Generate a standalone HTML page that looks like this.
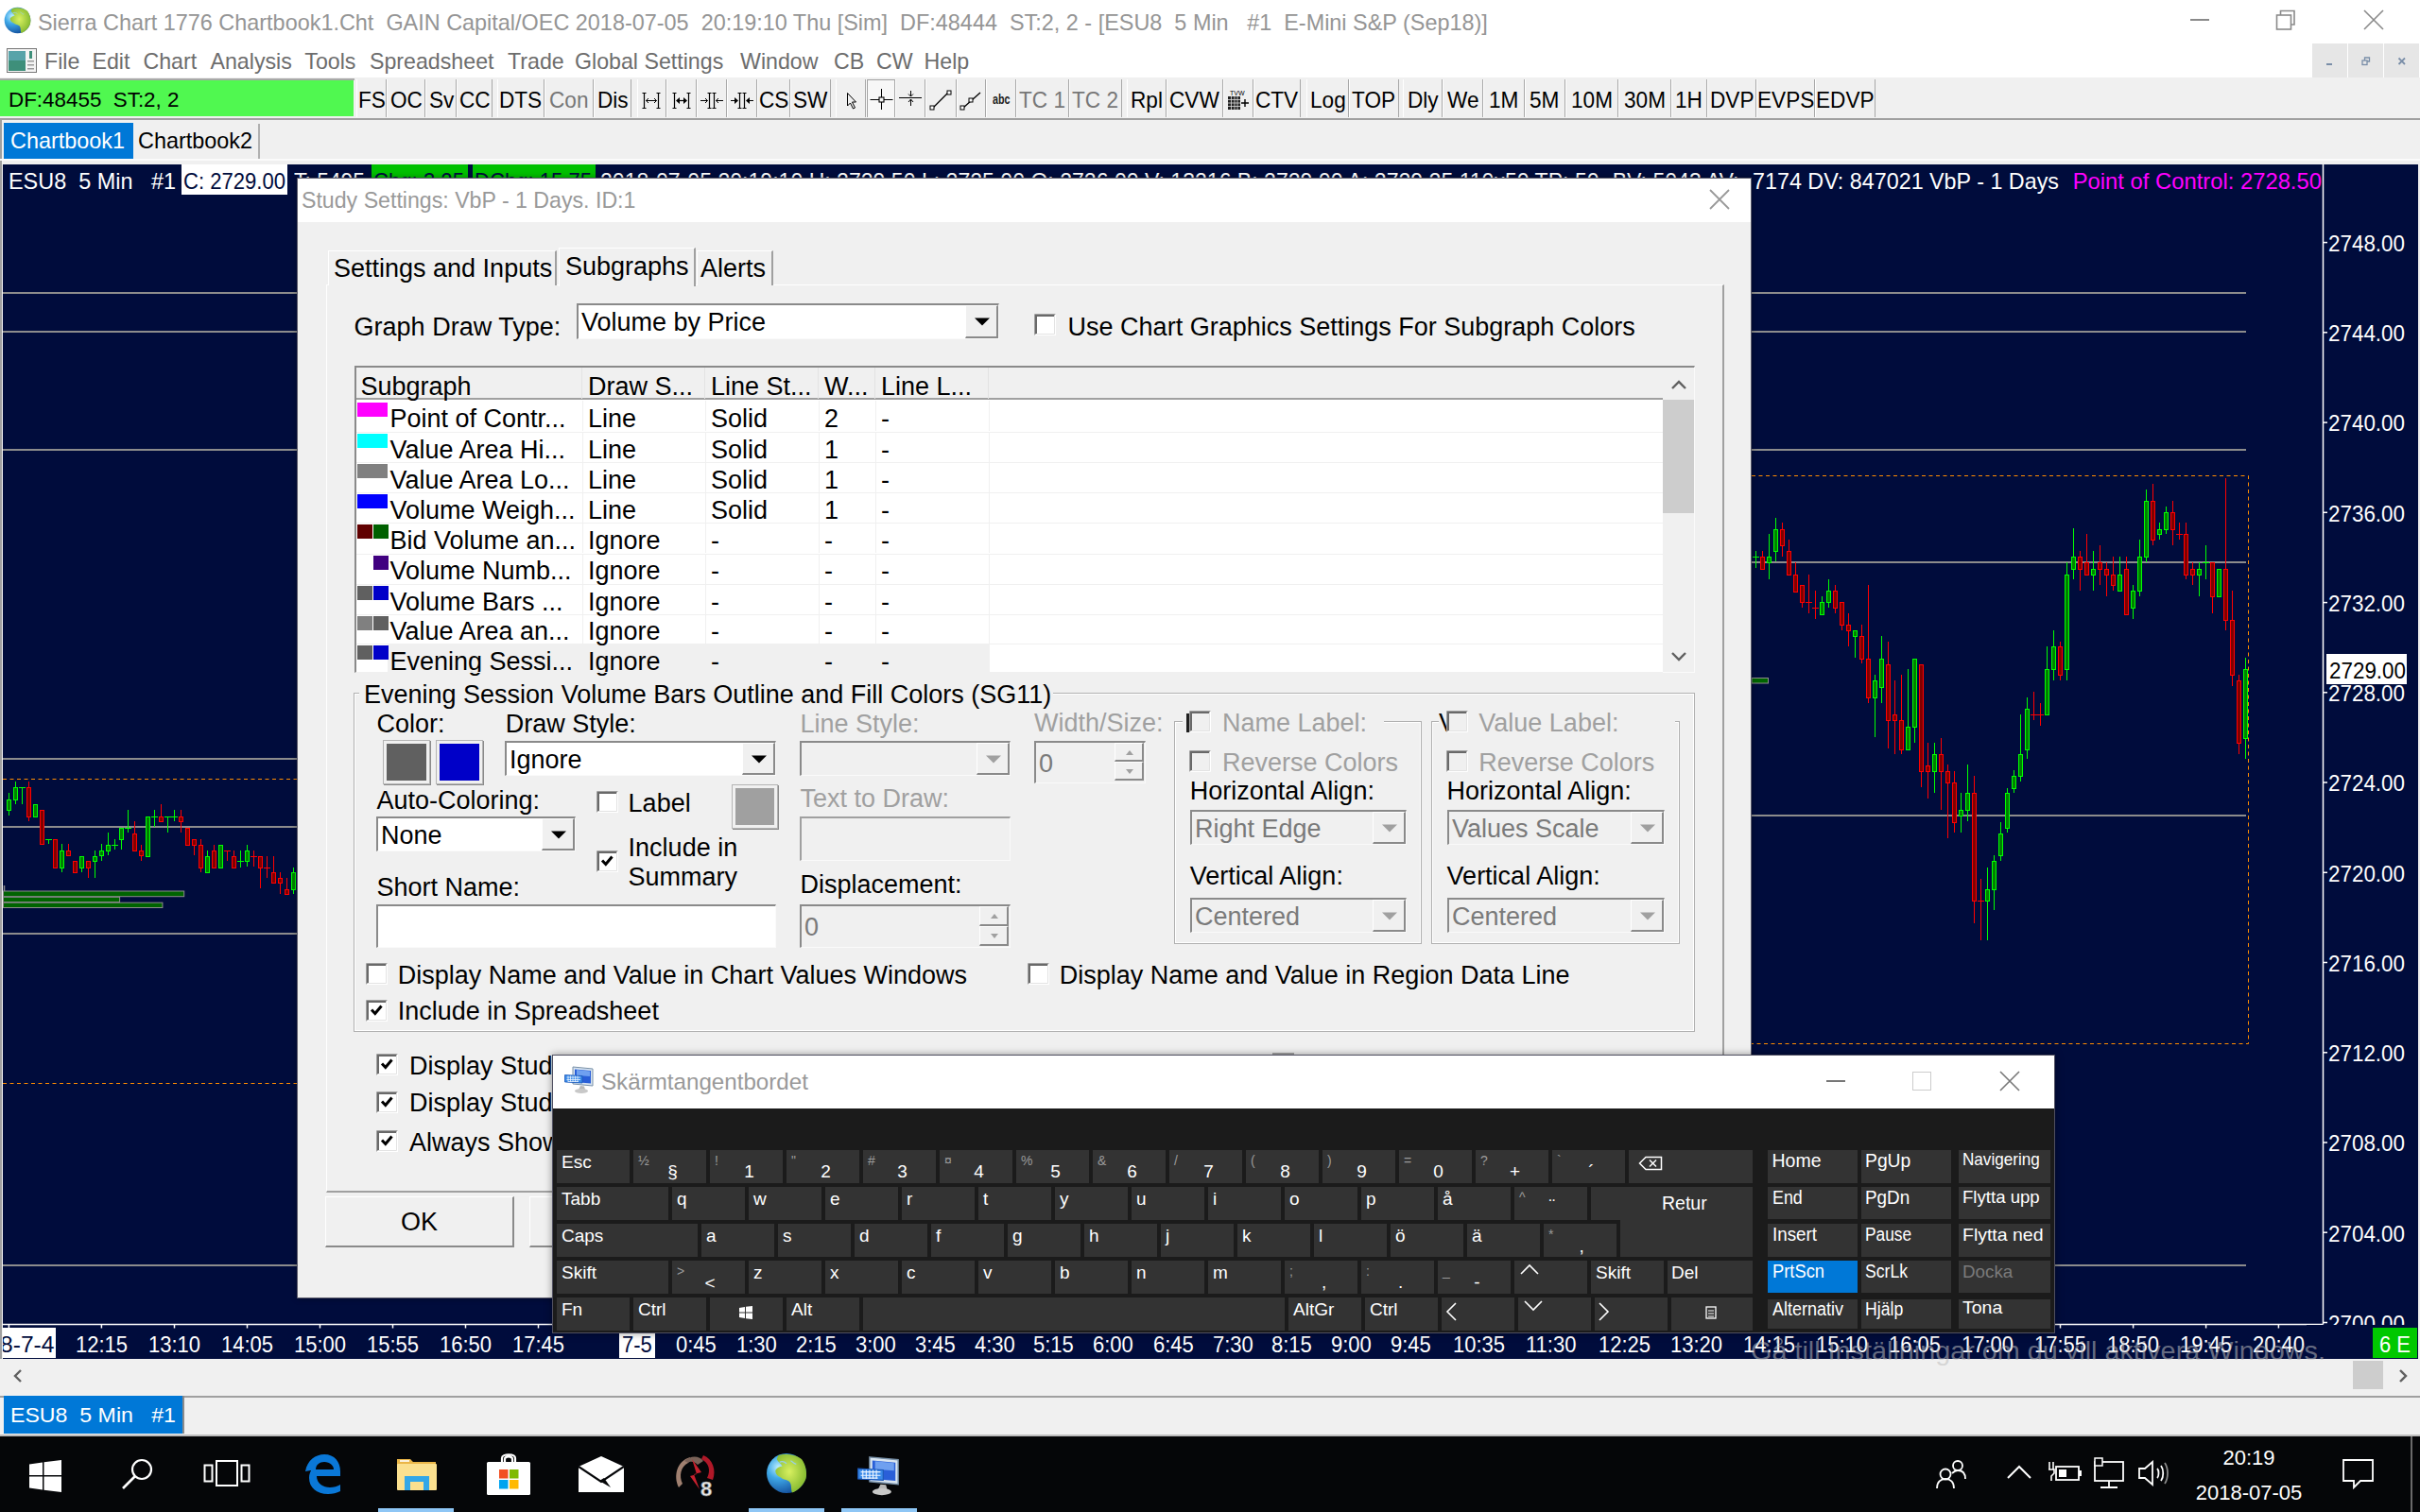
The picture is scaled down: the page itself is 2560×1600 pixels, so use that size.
<!DOCTYPE html><html><head><meta charset="utf-8"><style>
html,body{margin:0;padding:0;}
body{width:2560px;height:1600px;overflow:hidden;position:relative;background:#f0f0f0;font-family:"Liberation Sans",sans-serif;}
.a{position:absolute;}
.t{position:absolute;white-space:pre;font-family:"Liberation Sans",sans-serif;}
</style></head><body>

<div class="a" style="left:0px;top:0px;width:2560px;height:82px;background:#fff;"></div>
<svg class="a" style="left:4px;top:7px" width="29" height="29" viewBox="0 0 30 30">
<defs><radialGradient id="go" cx="0.3" cy="0.35" r="0.8"><stop offset="0" stop-color="#bff0ff"/><stop offset="0.35" stop-color="#3fa8e8"/><stop offset="1" stop-color="#0a3c8c"/></radialGradient>
<radialGradient id="gl" cx="0.45" cy="0.45" r="0.75"><stop offset="0" stop-color="#d8f060"/><stop offset="1" stop-color="#6aa820"/></radialGradient></defs>
<circle cx="15" cy="15" r="14.3" fill="url(#go)"/>
<path d="M9 2.2C14 0.5 22 1.5 26 5C29 9 30 15 29 19C27 24 23 28 19 29C18 26 19 23 17 21C15 19 13 20 11 18C8 17 7 15 7 13C8 11 10 10 12 10C11 8 9 7 8 5Z" fill="url(#gl)"/>
<path d="M10 7C12 6 14 7 15 8M18 6C20 7 21 9 22 8" stroke="#9ad0e8" stroke-width="0.8" fill="none"/>
</svg>
<div class="t" style="left:39.5px;top:12.5px;font-size:23.6px;line-height:23.6px;color:#959595;transform:scaleX(0.9926);transform-origin:0 0;">Sierra Chart 1776 Chartbook1.Cht  GAIN Capital/OEC 2018-07-05  20:19:10 Thu [Sim]  DF:48444  ST:2, 2 - [ESU8  5 Min   #1  E-Mini S&amp;P (Sep18)]</div>
<div class="a" style="left:2317px;top:20px;width:20px;height:2px;background:#8a8a8a;"></div>
<svg class="a" style="left:2404px;top:9px" width="26" height="26" viewBox="0 0 26 26"><rect x="4.5" y="7" width="15" height="15" fill="none" stroke="#8a8a8a" stroke-width="1.6"/><path d="M8.5 7 V2.5 H23 V17 H19.5" fill="none" stroke="#8a8a8a" stroke-width="1.6"/></svg>
<svg class="a" style="left:2498px;top:8px" width="26" height="26" viewBox="0 0 26 26"><path d="M3 3 L23 23 M23 3 L3 23" stroke="#8a8a8a" stroke-width="1.6"/></svg>
<svg class="a" style="left:7px;top:50px" width="32" height="27" viewBox="0 0 32 27"><rect x="0.5" y="1.5" width="31" height="25" fill="#f4f4f4" stroke="#777"/><rect x="2" y="4" width="18" height="21" fill="#3e8f7a"/><rect x="2" y="4" width="18" height="10" fill="#6ab0c8" opacity="0.6"/><rect x="24" y="4" width="3" height="8" fill="#3e8f7a"/><rect x="22" y="14" width="7" height="1.5" fill="#999"/><rect x="22" y="18" width="7" height="1.5" fill="#999"/><rect x="22" y="22" width="7" height="1.5" fill="#999"/></svg>
<div class="t" style="left:47.0px;top:54.4px;font-size:23.2px;line-height:23.2px;color:#6d6d6d;">File</div>
<div class="t" style="left:97.5px;top:54.4px;font-size:23.2px;line-height:23.2px;color:#6d6d6d;">Edit</div>
<div class="t" style="left:151.4px;top:54.4px;font-size:23.2px;line-height:23.2px;color:#6d6d6d;">Chart</div>
<div class="t" style="left:222.5px;top:54.4px;font-size:23.2px;line-height:23.2px;color:#6d6d6d;">Analysis</div>
<div class="t" style="left:322.3px;top:54.4px;font-size:23.2px;line-height:23.2px;color:#6d6d6d;">Tools</div>
<div class="t" style="left:391.0px;top:54.4px;font-size:23.2px;line-height:23.2px;color:#6d6d6d;">Spreadsheet</div>
<div class="t" style="left:537.0px;top:54.4px;font-size:23.2px;line-height:23.2px;color:#6d6d6d;">Trade</div>
<div class="t" style="left:608.0px;top:54.4px;font-size:23.2px;line-height:23.2px;color:#6d6d6d;">Global Settings</div>
<div class="t" style="left:783.0px;top:54.4px;font-size:23.2px;line-height:23.2px;color:#6d6d6d;">Window</div>
<div class="t" style="left:882.0px;top:54.4px;font-size:23.2px;line-height:23.2px;color:#6d6d6d;">CB</div>
<div class="t" style="left:927.0px;top:54.4px;font-size:23.2px;line-height:23.2px;color:#6d6d6d;">CW</div>
<div class="t" style="left:977.5px;top:54.4px;font-size:23.2px;line-height:23.2px;color:#6d6d6d;">Help</div>
<div class="a" style="left:2446px;top:46px;width:37px;height:37px;background:#e6e6e6;"></div>
<div class="a" style="left:2484px;top:46px;width:37px;height:37px;background:#e6e6e6;"></div>
<div class="a" style="left:2522px;top:46px;width:37px;height:37px;background:#e6e6e6;"></div>
<div class="a" style="left:2461px;top:67px;width:6px;height:2px;background:#7a8ea8;"></div>
<svg class="a" style="left:2498px;top:60px" width="10" height="10" viewBox="0 0 10 10"><rect x="1" y="4" width="5" height="4.5" fill="none" stroke="#7a8ea8" stroke-width="1.3"/><path d="M3.5 4V1H8.5V5H6" fill="none" stroke="#7a8ea8" stroke-width="1.3"/></svg>
<svg class="a" style="left:2536px;top:60px" width="10" height="10" viewBox="0 0 10 10"><path d="M1.5 1.5L8 8M8 1.5L1.5 8" stroke="#7a8ea8" stroke-width="1.8"/></svg>
<div class="a" style="left:0px;top:82px;width:2560px;height:46px;background:#f0f0f0;"></div>
<div class="a" style="left:0px;top:83px;width:375px;height:2px;background:#a8a8a8;"></div>
<div class="a" style="left:0px;top:125px;width:2560px;height:2px;background:#a0a0a0;"></div>
<div class="a" style="left:0px;top:85px;width:374px;height:38px;background:#50f850;"></div>
<div class="t" style="left:9.0px;top:95.0px;font-size:22.4px;line-height:22.4px;color:#000;">DF:48455  ST:2, 2</div>
<div class="a" style="left:377px;top:84px;width:32px;height:40px;border-left:1px solid #fff;border-right:1px solid #a8a8a8;box-sizing:border-box;"></div>
<div class="t" style="left:378.9px;top:94.3px;font-size:24.5px;line-height:24.5px;color:#000;transform:scaleX(0.9224);transform-origin:0 0;">FS</div>
<div class="a" style="left:409px;top:84px;width:41px;height:40px;border-left:1px solid #fff;border-right:1px solid #a8a8a8;box-sizing:border-box;"></div>
<div class="t" style="left:412.9px;top:94.3px;font-size:24.5px;line-height:24.5px;color:#000;transform:scaleX(0.9224);transform-origin:0 0;">OC</div>
<div class="a" style="left:450px;top:84px;width:33px;height:40px;border-left:1px solid #fff;border-right:1px solid #a8a8a8;box-sizing:border-box;"></div>
<div class="t" style="left:453.5px;top:94.3px;font-size:24.5px;line-height:24.5px;color:#000;transform:scaleX(0.9224);transform-origin:0 0;">Sv</div>
<div class="a" style="left:483px;top:84px;width:38px;height:40px;border-left:1px solid #fff;border-right:1px solid #a8a8a8;box-sizing:border-box;"></div>
<div class="t" style="left:485.7px;top:94.3px;font-size:24.5px;line-height:24.5px;color:#000;transform:scaleX(0.9224);transform-origin:0 0;">CC</div>
<div class="a" style="left:526px;top:84px;width:50px;height:40px;border-left:1px solid #fff;border-right:1px solid #a8a8a8;box-sizing:border-box;"></div>
<div class="t" style="left:528.4px;top:94.3px;font-size:24.5px;line-height:24.5px;color:#000;transform:scaleX(0.9224);transform-origin:0 0;">DTS</div>
<div class="a" style="left:576px;top:84px;width:52px;height:40px;border-left:1px solid #fff;border-right:1px solid #a8a8a8;box-sizing:border-box;"></div>
<div class="t" style="left:581.1px;top:94.3px;font-size:24.5px;line-height:24.5px;color:#777;transform:scaleX(0.9224);transform-origin:0 0;">Con</div>
<div class="a" style="left:628px;top:84px;width:40px;height:40px;border-left:1px solid #fff;border-right:1px solid #a8a8a8;box-sizing:border-box;"></div>
<div class="t" style="left:631.7px;top:94.3px;font-size:24.5px;line-height:24.5px;color:#000;transform:scaleX(0.9224);transform-origin:0 0;">Dis</div>
<div class="a" style="left:674px;top:84px;width:31px;height:40px;border-left:1px solid #fff;border-right:1px solid #a8a8a8;box-sizing:border-box;"></div>
<svg class="a" style="left:675.1px;top:92px" width="28" height="28" viewBox="0 0 28 28"><path d="M6.5 6V23M21.5 6V23M4.5 6.5H8.5M19.5 22.5H23.5M4.5 22.5H8.5M19.5 6.5H23.5" stroke="#000" stroke-width="1.2" fill="none"/><path d="M8.5 14.5H19.5M8.5 14.5L11 12M8.5 14.5L11 17M19.5 14.5L17 12M19.5 14.5L17 17" stroke="#000" stroke-width="1" fill="none"/></svg>
<div class="a" style="left:705px;top:84px;width:32px;height:40px;border-left:1px solid #fff;border-right:1px solid #a8a8a8;box-sizing:border-box;"></div>
<svg class="a" style="left:706.8px;top:92px" width="28" height="28" viewBox="0 0 28 28"><path d="M6.5 6V23M21.5 6V23M4.5 6.5H8.5M19.5 22.5H23.5M4.5 22.5H8.5M19.5 6.5H23.5" stroke="#000" stroke-width="1.2" fill="none"/><path d="M9 14.5H19" stroke="#000" stroke-width="1.2"/><path d="M8 14.5L12 11V18Z M20 14.5L16 11V18Z" fill="#000"/></svg>
<div class="a" style="left:737px;top:84px;width:32px;height:40px;border-left:1px solid #fff;border-right:1px solid #a8a8a8;box-sizing:border-box;"></div>
<svg class="a" style="left:738.8px;top:92px" width="28" height="28" viewBox="0 0 28 28"><path d="M11.5 6V23M16.5 6V23M9.5 22.5H13.5M14.5 6.5H18.5M9.5 6.5H13.5M14.5 22.5H18.5" stroke="#000" stroke-width="1.2" fill="none"/><path d="M2 14.5H9.5M9.5 14.5L7 12M9.5 14.5L7 17M26 14.5H18.5M18.5 14.5L21 12M18.5 14.5L21 17" stroke="#000" stroke-width="1" fill="none"/></svg>
<div class="a" style="left:769px;top:84px;width:32px;height:40px;border-left:1px solid #fff;border-right:1px solid #a8a8a8;box-sizing:border-box;"></div>
<svg class="a" style="left:770.8px;top:92px" width="28" height="28" viewBox="0 0 28 28"><path d="M11.5 6V23M16.5 6V23M9.5 22.5H13.5M14.5 6.5H18.5M9.5 6.5H13.5M14.5 22.5H18.5" stroke="#000" stroke-width="1.2" fill="none"/><path d="M2 14.5H8M26 14.5H20" stroke="#000" stroke-width="1.2"/><path d="M10 14.5L6 11V18Z M18 14.5L22 11V18Z" fill="#000"/></svg>
<div class="a" style="left:801px;top:84px;width:35px;height:40px;border-left:1px solid #fff;border-right:1px solid #a8a8a8;box-sizing:border-box;"></div>
<div class="t" style="left:803.0px;top:94.3px;font-size:24.5px;line-height:24.5px;color:#000;transform:scaleX(0.9224);transform-origin:0 0;">CS</div>
<div class="a" style="left:836px;top:84px;width:43px;height:40px;border-left:1px solid #fff;border-right:1px solid #a8a8a8;box-sizing:border-box;"></div>
<div class="t" style="left:839.4px;top:94.3px;font-size:24.5px;line-height:24.5px;color:#000;transform:scaleX(0.9224);transform-origin:0 0;">SW</div>
<div class="a" style="left:884px;top:84px;width:32px;height:40px;border-left:1px solid #fff;border-right:1px solid #a8a8a8;box-sizing:border-box;"></div>
<svg class="a" style="left:886.0px;top:92px" width="28" height="28" viewBox="0 0 28 28"><path d="M10.5 6.5L10.5 20L13.5 17L16.5 23L18.5 22L15.5 16L19.5 16Z" fill="#f0f0f0" stroke="#000" stroke-width="1"/></svg>
<div class="a" style="left:916px;top:84px;width:31px;height:40px;border-left:1px solid #fff;border-right:1px solid #a8a8a8;box-sizing:border-box;"></div>
<svg class="a" style="left:917.6px;top:92px" width="28" height="28" viewBox="0 0 28 28"><path d="M14.5 2V24M2.5 13.5H26.5" stroke="#000" stroke-width="1"/><rect x="12" y="11" width="5" height="5" fill="#f7f7f7" stroke="#000" stroke-width="1.1"/></svg>
<div class="a" style="left:947px;top:84px;width:32px;height:40px;border-left:1px solid #fff;border-right:1px solid #a8a8a8;box-sizing:border-box;"></div>
<svg class="a" style="left:949.2px;top:92px" width="28" height="28" viewBox="0 0 28 28"><path d="M2 11.5H26M14.5 4V10M14.5 13V20M12 7.5L14.5 10L17 7.5M12 16L14.5 13L17 16" stroke="#000" stroke-width="1" fill="none"/></svg>
<div class="a" style="left:979px;top:84px;width:33px;height:40px;border-left:1px solid #fff;border-right:1px solid #a8a8a8;box-sizing:border-box;"></div>
<svg class="a" style="left:981.4px;top:92px" width="28" height="28" viewBox="0 0 28 28"><path d="M6 22L22 6" stroke="#000" stroke-width="1.3"/><rect x="3" y="20" width="4" height="4" fill="#fff" stroke="#000"/><rect x="21" y="4" width="4" height="4" fill="#fff" stroke="#000"/></svg>
<div class="a" style="left:1012px;top:84px;width:31px;height:40px;border-left:1px solid #fff;border-right:1px solid #a8a8a8;box-sizing:border-box;"></div>
<svg class="a" style="left:1013.2px;top:92px" width="28" height="28" viewBox="0 0 28 28"><path d="M6 22L24 6" stroke="#000" stroke-width="1.3"/><rect x="3" y="20" width="4" height="4" fill="#fff" stroke="#000"/><rect x="12" y="12" width="4" height="4" fill="#fff" stroke="#000"/></svg>
<div class="a" style="left:1043px;top:84px;width:32px;height:40px;border-left:1px solid #fff;border-right:1px solid #a8a8a8;box-sizing:border-box;"></div>
<div class="t" style="left:1049.8px;top:98.1px;font-size:14px;line-height:14px;color:#222;transform:scaleX(0.7669);transform-origin:0 0;font-weight:bold;">abc</div>
<div class="a" style="left:1075px;top:84px;width:56px;height:40px;border-left:1px solid #fff;border-right:1px solid #a8a8a8;box-sizing:border-box;"></div>
<div class="t" style="left:1078.4px;top:94.3px;font-size:24.5px;line-height:24.5px;color:#777;transform:scaleX(0.9224);transform-origin:0 0;">TC 1</div>
<div class="a" style="left:1131px;top:84px;width:56px;height:40px;border-left:1px solid #fff;border-right:1px solid #a8a8a8;box-sizing:border-box;"></div>
<div class="t" style="left:1134.4px;top:94.3px;font-size:24.5px;line-height:24.5px;color:#777;transform:scaleX(0.9224);transform-origin:0 0;">TC 2</div>
<div class="a" style="left:1192px;top:84px;width:42px;height:40px;border-left:1px solid #fff;border-right:1px solid #a8a8a8;box-sizing:border-box;"></div>
<div class="t" style="left:1196.0px;top:94.3px;font-size:24.5px;line-height:24.5px;color:#000;transform:scaleX(0.9224);transform-origin:0 0;">Rpl</div>
<div class="a" style="left:1234px;top:84px;width:60px;height:40px;border-left:1px solid #fff;border-right:1px solid #a8a8a8;box-sizing:border-box;"></div>
<div class="t" style="left:1237.2px;top:94.3px;font-size:24.5px;line-height:24.5px;color:#000;transform:scaleX(0.9224);transform-origin:0 0;">CVW</div>
<div class="a" style="left:1294px;top:84px;width:32px;height:40px;border-left:1px solid #fff;border-right:1px solid #a8a8a8;box-sizing:border-box;"></div>
<svg class="a" style="left:1295.5px;top:92px" width="28" height="28" viewBox="0 0 28 28"><text x="5" y="9" font-size="7" font-family="Liberation Sans">TVW</text><rect x="3" y="10" width="13" height="14" fill="#222"/><path d="M3 13.5H16M3 17H16M3 20.5H16M6.5 10V24M10 10V24M13 10V24" stroke="#ddd" stroke-width="0.8"/><path d="M17 17H25M21 13V21" stroke="#000" stroke-width="1.4"/></svg>
<div class="a" style="left:1326px;top:84px;width:50px;height:40px;border-left:1px solid #fff;border-right:1px solid #a8a8a8;box-sizing:border-box;"></div>
<div class="t" style="left:1328.2px;top:94.3px;font-size:24.5px;line-height:24.5px;color:#000;transform:scaleX(0.9224);transform-origin:0 0;">CTV</div>
<div class="a" style="left:1382px;top:84px;width:45px;height:40px;border-left:1px solid #fff;border-right:1px solid #a8a8a8;box-sizing:border-box;"></div>
<div class="t" style="left:1385.7px;top:94.3px;font-size:24.5px;line-height:24.5px;color:#000;transform:scaleX(0.9224);transform-origin:0 0;">Log</div>
<div class="a" style="left:1427px;top:84px;width:53px;height:40px;border-left:1px solid #fff;border-right:1px solid #a8a8a8;box-sizing:border-box;"></div>
<div class="t" style="left:1430.4px;top:94.3px;font-size:24.5px;line-height:24.5px;color:#000;transform:scaleX(0.9224);transform-origin:0 0;">TOP</div>
<div class="a" style="left:1484px;top:84px;width:42px;height:40px;border-left:1px solid #fff;border-right:1px solid #a8a8a8;box-sizing:border-box;"></div>
<div class="t" style="left:1489.0px;top:94.3px;font-size:24.5px;line-height:24.5px;color:#000;transform:scaleX(0.9224);transform-origin:0 0;">Dly</div>
<div class="a" style="left:1526px;top:84px;width:43px;height:40px;border-left:1px solid #fff;border-right:1px solid #a8a8a8;box-sizing:border-box;"></div>
<div class="t" style="left:1531.0px;top:94.3px;font-size:24.5px;line-height:24.5px;color:#000;transform:scaleX(0.9224);transform-origin:0 0;">We</div>
<div class="a" style="left:1569px;top:84px;width:44px;height:40px;border-left:1px solid #fff;border-right:1px solid #a8a8a8;box-sizing:border-box;"></div>
<div class="t" style="left:1575.2px;top:94.3px;font-size:24.5px;line-height:24.5px;color:#000;transform:scaleX(0.9224);transform-origin:0 0;">1M</div>
<div class="a" style="left:1613px;top:84px;width:43px;height:40px;border-left:1px solid #fff;border-right:1px solid #a8a8a8;box-sizing:border-box;"></div>
<div class="t" style="left:1618.4px;top:94.3px;font-size:24.5px;line-height:24.5px;color:#000;transform:scaleX(0.9224);transform-origin:0 0;">5M</div>
<div class="a" style="left:1656px;top:84px;width:56px;height:40px;border-left:1px solid #fff;border-right:1px solid #a8a8a8;box-sizing:border-box;"></div>
<div class="t" style="left:1661.7px;top:94.3px;font-size:24.5px;line-height:24.5px;color:#000;transform:scaleX(0.9224);transform-origin:0 0;">10M</div>
<div class="a" style="left:1712px;top:84px;width:56px;height:40px;border-left:1px solid #fff;border-right:1px solid #a8a8a8;box-sizing:border-box;"></div>
<div class="t" style="left:1717.8px;top:94.3px;font-size:24.5px;line-height:24.5px;color:#000;transform:scaleX(0.9224);transform-origin:0 0;">30M</div>
<div class="a" style="left:1768px;top:84px;width:38px;height:40px;border-left:1px solid #fff;border-right:1px solid #a8a8a8;box-sizing:border-box;"></div>
<div class="t" style="left:1772.3px;top:94.3px;font-size:24.5px;line-height:24.5px;color:#000;transform:scaleX(0.9224);transform-origin:0 0;">1H</div>
<div class="a" style="left:1806px;top:84px;width:52px;height:40px;border-left:1px solid #fff;border-right:1px solid #a8a8a8;box-sizing:border-box;"></div>
<div class="t" style="left:1808.7px;top:94.3px;font-size:24.5px;line-height:24.5px;color:#000;transform:scaleX(0.9224);transform-origin:0 0;">DVP</div>
<div class="a" style="left:1858px;top:84px;width:62px;height:40px;border-left:1px solid #fff;border-right:1px solid #a8a8a8;box-sizing:border-box;"></div>
<div class="t" style="left:1858.9px;top:94.3px;font-size:24.5px;line-height:24.5px;color:#000;transform:scaleX(0.9224);transform-origin:0 0;">EVPS</div>
<div class="a" style="left:1920px;top:84px;width:64px;height:40px;border-left:1px solid #fff;border-right:1px solid #a8a8a8;box-sizing:border-box;"></div>
<div class="t" style="left:1921.3px;top:94.3px;font-size:24.5px;line-height:24.5px;color:#000;transform:scaleX(0.9224);transform-origin:0 0;">EDVP</div>
<div class="a" style="left:917px;top:84px;width:30px;height:40px;background:#f7f7f7;border-left:1px solid #a0a0a0;border-top:1px solid #a0a0a0;border-right:1px solid #a8a8a8;box-sizing:border-box;"></div>
<svg class="a" style="left:918.0px;top:92px" width="28" height="28" viewBox="0 0 28 28"><path d="M14.5 2V24M2.5 13.5H26.5" stroke="#000" stroke-width="1"/><rect x="12" y="11" width="5" height="5" fill="#f7f7f7" stroke="#000" stroke-width="1.1"/></svg>
<div class="a" style="left:0px;top:127px;width:2560px;height:47px;background:#f0f0f0;"></div>
<div class="a" style="left:0px;top:126px;width:2px;height:50px;background:#a0a0a0;"></div>
<div class="a" style="left:4px;top:130px;width:137px;height:38px;background:#0078d7;"></div>
<div class="t" style="left:10.5px;top:137.5px;font-size:23.6px;line-height:23.6px;color:#fff;transform:scaleX(0.9918);transform-origin:0 0;">Chartbook1</div>
<div class="a" style="left:142px;top:131px;width:133px;height:37px;border-right:2px solid #b0b0b0;box-sizing:border-box;"></div>
<div class="t" style="left:146.3px;top:137.5px;font-size:23.6px;line-height:23.6px;color:#000;transform:scaleX(0.9918);transform-origin:0 0;">Chartbook2</div>
<div class="a" style="left:0px;top:168px;width:2560px;height:2px;background:#fbfbfb;"></div>
<div class="a" style="left:0px;top:170px;width:2px;height:1270px;background:#a0a0a0;"></div>
<div class="a" style="left:2px;top:170px;width:1px;height:1270px;background:#f4f4f4;"></div>
<div class="a" style="left:3px;top:174px;width:2555px;height:1264px;background:#000c3c;"></div>
<svg class="a" style="left:0;top:0" width="2560" height="1600" viewBox="0 0 2560 1600"><rect x="3" y="309" width="2373" height="2" fill="#8c8c8c"/><rect x="3" y="350" width="2373" height="2" fill="#8c8c8c"/><rect x="3" y="475" width="2373" height="2" fill="#8c8c8c"/><rect x="3" y="802" width="313" height="2" fill="#8c8c8c"/><rect x="3" y="874" width="313" height="2" fill="#8c8c8c"/><rect x="3" y="987" width="313" height="2" fill="#8c8c8c"/><rect x="3" y="1338" width="313" height="2" fill="#8c8c8c"/><rect x="1853" y="594" width="523" height="2" fill="#8c8c8c"/><rect x="1853" y="862" width="523" height="2" fill="#8c8c8c"/><rect x="1853" y="1338" width="523" height="2" fill="#8c8c8c"/><path d="M3 824.5H316" stroke="#ff8c00" stroke-width="1" stroke-dasharray="4 3.5"/><path d="M3 1146.5H316" stroke="#ff8c00" stroke-width="1" stroke-dasharray="4 3.5"/><path d="M1853 503.5H2378.5V1104.5H1853" fill="none" stroke="#ff8c00" stroke-width="1" stroke-dasharray="4 3.5"/><path d="M4.5 937V943" stroke="#8c8c8c" stroke-width="1.5"/><rect x="3.5" y="943" width="191.2" height="5.7000000000000455" fill="#006400" stroke="#8c8c8c" stroke-width="1"/><rect x="3.5" y="949.3" width="123.1" height="5.300000000000068" fill="#006400" stroke="#8c8c8c" stroke-width="1"/><rect x="3.5" y="955.2" width="168.4" height="5.2999999999999545" fill="#006400" stroke="#8c8c8c" stroke-width="1"/><rect x="1853" y="717.5" width="17.5" height="5.5" fill="#006400" stroke="#8c8c8c" stroke-width="1"/><rect x="1857" y="583" width="1" height="18" fill="#00ff00"/><rect x="1854" y="589" width="7" height="1" fill="#00ff00"/><rect x="1864" y="583" width="1" height="19" fill="#ff0000"/><rect x="1862" y="589" width="5" height="14" fill="#ff0000"/><rect x="1863" y="590" width="3" height="12" fill="#800000"/><rect x="1871" y="565" width="1" height="48" fill="#00ff00"/><rect x="1869" y="589" width="5" height="7" fill="#00ff00"/><rect x="1870" y="590" width="3" height="5" fill="#008000"/><rect x="1878" y="548" width="1" height="46" fill="#00ff00"/><rect x="1876" y="560" width="5" height="24" fill="#00ff00"/><rect x="1877" y="561" width="3" height="22" fill="#008000"/><rect x="1885" y="553" width="1" height="36" fill="#ff0000"/><rect x="1883" y="560" width="5" height="18" fill="#ff0000"/><rect x="1884" y="561" width="3" height="16" fill="#800000"/><rect x="1892" y="571" width="1" height="37" fill="#ff0000"/><rect x="1890" y="583" width="5" height="26" fill="#ff0000"/><rect x="1891" y="584" width="3" height="24" fill="#800000"/><rect x="1899" y="595" width="1" height="31" fill="#ff0000"/><rect x="1897" y="608" width="5" height="19" fill="#ff0000"/><rect x="1898" y="609" width="3" height="17" fill="#800000"/><rect x="1906" y="619" width="1" height="24" fill="#ff0000"/><rect x="1904" y="619" width="5" height="19" fill="#ff0000"/><rect x="1905" y="620" width="3" height="17" fill="#800000"/><rect x="1913" y="608" width="1" height="41" fill="#ff0000"/><rect x="1910" y="637" width="7" height="1" fill="#ff0000"/><rect x="1920" y="625" width="1" height="30" fill="#ff0000"/><rect x="1917" y="643" width="7" height="1" fill="#ff0000"/><rect x="1927" y="631" width="1" height="19" fill="#00ff00"/><rect x="1925" y="637" width="5" height="14" fill="#00ff00"/><rect x="1926" y="638" width="3" height="12" fill="#008000"/><rect x="1934" y="613" width="1" height="30" fill="#00ff00"/><rect x="1932" y="625" width="5" height="13" fill="#00ff00"/><rect x="1933" y="626" width="3" height="11" fill="#008000"/><rect x="1941" y="619" width="1" height="30" fill="#ff0000"/><rect x="1939" y="625" width="5" height="19" fill="#ff0000"/><rect x="1940" y="626" width="3" height="17" fill="#800000"/><rect x="1948" y="637" width="1" height="30" fill="#ff0000"/><rect x="1946" y="637" width="5" height="25" fill="#ff0000"/><rect x="1947" y="638" width="3" height="23" fill="#800000"/><rect x="1955" y="649" width="1" height="35" fill="#ff0000"/><rect x="1953" y="661" width="5" height="7" fill="#ff0000"/><rect x="1954" y="662" width="3" height="5" fill="#800000"/><rect x="1962" y="667" width="1" height="29" fill="#00ff00"/><rect x="1960" y="667" width="5" height="7" fill="#00ff00"/><rect x="1961" y="668" width="3" height="5" fill="#008000"/><rect x="1969" y="661" width="1" height="41" fill="#ff0000"/><rect x="1967" y="673" width="5" height="25" fill="#ff0000"/><rect x="1968" y="674" width="3" height="23" fill="#800000"/><rect x="1976" y="619" width="1" height="125" fill="#ff0000"/><rect x="1974" y="697" width="5" height="42" fill="#ff0000"/><rect x="1975" y="698" width="3" height="40" fill="#800000"/><rect x="1983" y="714" width="1" height="66" fill="#00ff00"/><rect x="1981" y="720" width="5" height="19" fill="#00ff00"/><rect x="1982" y="721" width="3" height="17" fill="#008000"/><rect x="1990" y="673" width="1" height="71" fill="#00ff00"/><rect x="1988" y="697" width="5" height="31" fill="#00ff00"/><rect x="1989" y="698" width="3" height="29" fill="#008000"/><rect x="1997" y="679" width="1" height="113" fill="#ff0000"/><rect x="1995" y="703" width="5" height="60" fill="#ff0000"/><rect x="1996" y="704" width="3" height="58" fill="#800000"/><rect x="2004" y="720" width="1" height="78" fill="#ff0000"/><rect x="2002" y="756" width="5" height="7" fill="#ff0000"/><rect x="2003" y="757" width="3" height="5" fill="#800000"/><rect x="2011" y="714" width="1" height="84" fill="#ff0000"/><rect x="2009" y="762" width="5" height="32" fill="#ff0000"/><rect x="2010" y="763" width="3" height="30" fill="#800000"/><rect x="2018" y="708" width="1" height="85" fill="#00ff00"/><rect x="2016" y="769" width="5" height="25" fill="#00ff00"/><rect x="2017" y="770" width="3" height="23" fill="#008000"/><rect x="2025" y="697" width="1" height="89" fill="#00ff00"/><rect x="2023" y="697" width="5" height="73" fill="#00ff00"/><rect x="2024" y="698" width="3" height="71" fill="#008000"/><rect x="2032" y="703" width="1" height="130" fill="#ff0000"/><rect x="2030" y="703" width="5" height="114" fill="#ff0000"/><rect x="2031" y="704" width="3" height="112" fill="#800000"/><rect x="2039" y="786" width="1" height="59" fill="#ff0000"/><rect x="2037" y="810" width="5" height="7" fill="#ff0000"/><rect x="2038" y="811" width="3" height="5" fill="#800000"/><rect x="2046" y="786" width="1" height="53" fill="#00ff00"/><rect x="2044" y="798" width="5" height="19" fill="#00ff00"/><rect x="2045" y="799" width="3" height="17" fill="#008000"/><rect x="2053" y="781" width="1" height="76" fill="#ff0000"/><rect x="2051" y="798" width="5" height="19" fill="#ff0000"/><rect x="2052" y="799" width="3" height="17" fill="#800000"/><rect x="2060" y="809" width="1" height="78" fill="#ff0000"/><rect x="2058" y="816" width="5" height="13" fill="#ff0000"/><rect x="2059" y="817" width="3" height="11" fill="#800000"/><rect x="2067" y="816" width="1" height="65" fill="#ff0000"/><rect x="2065" y="828" width="5" height="43" fill="#ff0000"/><rect x="2066" y="829" width="3" height="41" fill="#800000"/><rect x="2074" y="839" width="1" height="42" fill="#00ff00"/><rect x="2072" y="857" width="5" height="7" fill="#00ff00"/><rect x="2073" y="858" width="3" height="5" fill="#008000"/><rect x="2081" y="809" width="1" height="60" fill="#00ff00"/><rect x="2079" y="839" width="5" height="19" fill="#00ff00"/><rect x="2080" y="840" width="3" height="17" fill="#008000"/><rect x="2088" y="821" width="1" height="156" fill="#ff0000"/><rect x="2086" y="839" width="5" height="115" fill="#ff0000"/><rect x="2087" y="840" width="3" height="113" fill="#800000"/><rect x="2095" y="930" width="1" height="65" fill="#ff0000"/><rect x="2092" y="953" width="7" height="1" fill="#ff0000"/><rect x="2102" y="918" width="1" height="77" fill="#00ff00"/><rect x="2100" y="941" width="5" height="13" fill="#00ff00"/><rect x="2101" y="942" width="3" height="11" fill="#008000"/><rect x="2109" y="905" width="1" height="58" fill="#00ff00"/><rect x="2107" y="911" width="5" height="31" fill="#00ff00"/><rect x="2108" y="912" width="3" height="29" fill="#008000"/><rect x="2116" y="870" width="1" height="41" fill="#00ff00"/><rect x="2114" y="882" width="5" height="24" fill="#00ff00"/><rect x="2115" y="883" width="3" height="22" fill="#008000"/><rect x="2123" y="834" width="1" height="47" fill="#00ff00"/><rect x="2121" y="839" width="5" height="38" fill="#00ff00"/><rect x="2122" y="840" width="3" height="36" fill="#008000"/><rect x="2130" y="815" width="1" height="24" fill="#00ff00"/><rect x="2128" y="821" width="5" height="14" fill="#00ff00"/><rect x="2129" y="822" width="3" height="12" fill="#008000"/><rect x="2137" y="756" width="1" height="71" fill="#00ff00"/><rect x="2135" y="798" width="5" height="24" fill="#00ff00"/><rect x="2136" y="799" width="3" height="22" fill="#008000"/><rect x="2144" y="738" width="1" height="65" fill="#00ff00"/><rect x="2142" y="750" width="5" height="44" fill="#00ff00"/><rect x="2143" y="751" width="3" height="42" fill="#008000"/><rect x="2151" y="732" width="1" height="30" fill="#ff0000"/><rect x="2148" y="756" width="7" height="1" fill="#ff0000"/><rect x="2158" y="744" width="1" height="24" fill="#ff0000"/><rect x="2155" y="756" width="7" height="1" fill="#ff0000"/><rect x="2165" y="684" width="1" height="72" fill="#00ff00"/><rect x="2163" y="708" width="5" height="49" fill="#00ff00"/><rect x="2164" y="709" width="3" height="47" fill="#008000"/><rect x="2172" y="667" width="1" height="53" fill="#00ff00"/><rect x="2170" y="684" width="5" height="25" fill="#00ff00"/><rect x="2171" y="685" width="3" height="23" fill="#008000"/><rect x="2179" y="679" width="1" height="41" fill="#ff0000"/><rect x="2177" y="684" width="5" height="31" fill="#ff0000"/><rect x="2178" y="685" width="3" height="29" fill="#800000"/><rect x="2186" y="595" width="1" height="125" fill="#00ff00"/><rect x="2184" y="608" width="5" height="101" fill="#00ff00"/><rect x="2185" y="609" width="3" height="99" fill="#008000"/><rect x="2193" y="559" width="1" height="54" fill="#00ff00"/><rect x="2191" y="589" width="5" height="14" fill="#00ff00"/><rect x="2192" y="590" width="3" height="12" fill="#008000"/><rect x="2200" y="583" width="1" height="42" fill="#ff0000"/><rect x="2198" y="589" width="5" height="14" fill="#ff0000"/><rect x="2199" y="590" width="3" height="12" fill="#800000"/><rect x="2207" y="565" width="1" height="43" fill="#ff0000"/><rect x="2205" y="595" width="5" height="14" fill="#ff0000"/><rect x="2206" y="596" width="3" height="12" fill="#800000"/><rect x="2214" y="583" width="1" height="42" fill="#00ff00"/><rect x="2212" y="602" width="5" height="7" fill="#00ff00"/><rect x="2213" y="603" width="3" height="5" fill="#008000"/><rect x="2221" y="577" width="1" height="42" fill="#ff0000"/><rect x="2219" y="595" width="5" height="8" fill="#ff0000"/><rect x="2220" y="596" width="3" height="6" fill="#800000"/><rect x="2228" y="595" width="1" height="36" fill="#ff0000"/><rect x="2226" y="602" width="5" height="7" fill="#ff0000"/><rect x="2227" y="603" width="3" height="5" fill="#800000"/><rect x="2235" y="589" width="1" height="36" fill="#ff0000"/><rect x="2233" y="608" width="5" height="12" fill="#ff0000"/><rect x="2234" y="609" width="3" height="10" fill="#800000"/><rect x="2242" y="589" width="1" height="36" fill="#00ff00"/><rect x="2240" y="608" width="5" height="18" fill="#00ff00"/><rect x="2241" y="609" width="3" height="16" fill="#008000"/><rect x="2249" y="589" width="1" height="61" fill="#ff0000"/><rect x="2247" y="602" width="5" height="49" fill="#ff0000"/><rect x="2248" y="603" width="3" height="47" fill="#800000"/><rect x="2256" y="619" width="1" height="36" fill="#00ff00"/><rect x="2254" y="625" width="5" height="19" fill="#00ff00"/><rect x="2255" y="626" width="3" height="17" fill="#008000"/><rect x="2263" y="571" width="1" height="60" fill="#00ff00"/><rect x="2261" y="589" width="5" height="37" fill="#00ff00"/><rect x="2262" y="590" width="3" height="35" fill="#008000"/><rect x="2270" y="518" width="1" height="77" fill="#00ff00"/><rect x="2268" y="530" width="5" height="60" fill="#00ff00"/><rect x="2269" y="531" width="3" height="58" fill="#008000"/><rect x="2277" y="512" width="1" height="65" fill="#ff0000"/><rect x="2275" y="530" width="5" height="42" fill="#ff0000"/><rect x="2276" y="531" width="3" height="40" fill="#800000"/><rect x="2284" y="553" width="1" height="18" fill="#00ff00"/><rect x="2282" y="560" width="5" height="6" fill="#00ff00"/><rect x="2283" y="561" width="3" height="4" fill="#008000"/><rect x="2291" y="536" width="1" height="29" fill="#00ff00"/><rect x="2289" y="542" width="5" height="19" fill="#00ff00"/><rect x="2290" y="543" width="3" height="17" fill="#008000"/><rect x="2298" y="530" width="1" height="47" fill="#ff0000"/><rect x="2296" y="542" width="5" height="19" fill="#ff0000"/><rect x="2297" y="543" width="3" height="17" fill="#800000"/><rect x="2305" y="553" width="1" height="18" fill="#ff0000"/><rect x="2302" y="565" width="7" height="1" fill="#ff0000"/><rect x="2312" y="553" width="1" height="60" fill="#ff0000"/><rect x="2310" y="565" width="5" height="44" fill="#ff0000"/><rect x="2311" y="566" width="3" height="42" fill="#800000"/><rect x="2319" y="595" width="1" height="24" fill="#ff0000"/><rect x="2317" y="602" width="5" height="7" fill="#ff0000"/><rect x="2318" y="603" width="3" height="5" fill="#800000"/><rect x="2326" y="595" width="1" height="36" fill="#00ff00"/><rect x="2324" y="602" width="5" height="7" fill="#00ff00"/><rect x="2325" y="603" width="3" height="5" fill="#008000"/><rect x="2333" y="577" width="1" height="36" fill="#00ff00"/><rect x="2330" y="595" width="7" height="1" fill="#00ff00"/><rect x="2340" y="595" width="1" height="54" fill="#ff0000"/><rect x="2338" y="595" width="5" height="37" fill="#ff0000"/><rect x="2339" y="596" width="3" height="35" fill="#800000"/><rect x="2347" y="602" width="1" height="29" fill="#00ff00"/><rect x="2345" y="602" width="5" height="30" fill="#00ff00"/><rect x="2346" y="603" width="3" height="28" fill="#008000"/><rect x="2354" y="506" width="1" height="161" fill="#ff0000"/><rect x="2352" y="602" width="5" height="55" fill="#ff0000"/><rect x="2353" y="603" width="3" height="53" fill="#800000"/><rect x="2361" y="625" width="1" height="101" fill="#ff0000"/><rect x="2359" y="656" width="5" height="59" fill="#ff0000"/><rect x="2360" y="657" width="3" height="57" fill="#800000"/><rect x="2368" y="714" width="1" height="84" fill="#ff0000"/><rect x="2366" y="720" width="5" height="67" fill="#ff0000"/><rect x="2367" y="721" width="3" height="65" fill="#800000"/><rect x="2375" y="696" width="1" height="107" fill="#00ff00"/><rect x="2373" y="708" width="5" height="74" fill="#00ff00"/><rect x="2374" y="709" width="3" height="72" fill="#008000"/><rect x="9" y="839" width="1" height="24" fill="#00ff00"/><rect x="7" y="846" width="5" height="12" fill="#00ff00"/><rect x="8" y="847" width="3" height="10" fill="#008000"/><rect x="16" y="827" width="1" height="24" fill="#00ff00"/><rect x="14" y="833" width="5" height="14" fill="#00ff00"/><rect x="15" y="834" width="3" height="12" fill="#008000"/><rect x="23" y="833" width="1" height="18" fill="#00ff00"/><rect x="20" y="833" width="7" height="1" fill="#00ff00"/><rect x="30" y="827" width="1" height="42" fill="#ff0000"/><rect x="28" y="833" width="5" height="32" fill="#ff0000"/><rect x="29" y="834" width="3" height="30" fill="#800000"/><rect x="37" y="851" width="1" height="13" fill="#00ff00"/><rect x="35" y="851" width="5" height="14" fill="#00ff00"/><rect x="36" y="852" width="3" height="12" fill="#008000"/><rect x="44" y="857" width="1" height="36" fill="#ff0000"/><rect x="42" y="857" width="5" height="37" fill="#ff0000"/><rect x="43" y="858" width="3" height="35" fill="#800000"/><rect x="51" y="888" width="1" height="5" fill="#00ff00"/><rect x="48" y="888" width="7" height="1" fill="#00ff00"/><rect x="58" y="888" width="1" height="30" fill="#ff0000"/><rect x="56" y="888" width="5" height="31" fill="#ff0000"/><rect x="57" y="889" width="3" height="29" fill="#800000"/><rect x="65" y="893" width="1" height="30" fill="#00ff00"/><rect x="63" y="900" width="5" height="19" fill="#00ff00"/><rect x="64" y="901" width="3" height="17" fill="#008000"/><rect x="72" y="893" width="1" height="12" fill="#ff0000"/><rect x="70" y="900" width="5" height="6" fill="#ff0000"/><rect x="71" y="901" width="3" height="4" fill="#800000"/><rect x="79" y="911" width="1" height="12" fill="#ff0000"/><rect x="77" y="911" width="5" height="13" fill="#ff0000"/><rect x="78" y="912" width="3" height="11" fill="#800000"/><rect x="86" y="906" width="1" height="17" fill="#00ff00"/><rect x="84" y="906" width="5" height="13" fill="#00ff00"/><rect x="85" y="907" width="3" height="11" fill="#008000"/><rect x="93" y="911" width="1" height="18" fill="#ff0000"/><rect x="91" y="911" width="5" height="8" fill="#ff0000"/><rect x="92" y="912" width="3" height="6" fill="#800000"/><rect x="100" y="900" width="1" height="29" fill="#00ff00"/><rect x="98" y="906" width="5" height="6" fill="#00ff00"/><rect x="99" y="907" width="3" height="4" fill="#008000"/><rect x="107" y="893" width="1" height="18" fill="#00ff00"/><rect x="105" y="900" width="5" height="6" fill="#00ff00"/><rect x="106" y="901" width="3" height="4" fill="#008000"/><rect x="114" y="881" width="1" height="24" fill="#00ff00"/><rect x="112" y="894" width="5" height="7" fill="#00ff00"/><rect x="113" y="895" width="3" height="5" fill="#008000"/><rect x="121" y="888" width="1" height="11" fill="#00ff00"/><rect x="118" y="894" width="7" height="1" fill="#00ff00"/><rect x="128" y="876" width="1" height="23" fill="#00ff00"/><rect x="126" y="876" width="5" height="13" fill="#00ff00"/><rect x="127" y="877" width="3" height="11" fill="#008000"/><rect x="135" y="857" width="1" height="24" fill="#00ff00"/><rect x="132" y="876" width="7" height="1" fill="#00ff00"/><rect x="142" y="869" width="1" height="31" fill="#ff0000"/><rect x="140" y="882" width="5" height="19" fill="#ff0000"/><rect x="141" y="883" width="3" height="17" fill="#800000"/><rect x="149" y="894" width="1" height="17" fill="#ff0000"/><rect x="147" y="900" width="5" height="6" fill="#ff0000"/><rect x="148" y="901" width="3" height="4" fill="#800000"/><rect x="156" y="864" width="1" height="42" fill="#00ff00"/><rect x="154" y="864" width="5" height="43" fill="#00ff00"/><rect x="155" y="865" width="3" height="41" fill="#008000"/><rect x="163" y="857" width="1" height="18" fill="#00ff00"/><rect x="160" y="864" width="7" height="1" fill="#00ff00"/><rect x="170" y="851" width="1" height="18" fill="#ff0000"/><rect x="168" y="864" width="5" height="6" fill="#ff0000"/><rect x="169" y="865" width="3" height="4" fill="#800000"/><rect x="177" y="864" width="1" height="17" fill="#00ff00"/><rect x="174" y="864" width="7" height="1" fill="#00ff00"/><rect x="184" y="857" width="1" height="12" fill="#00ff00"/><rect x="181" y="864" width="7" height="1" fill="#00ff00"/><rect x="191" y="857" width="1" height="24" fill="#ff0000"/><rect x="189" y="864" width="5" height="6" fill="#ff0000"/><rect x="190" y="865" width="3" height="4" fill="#800000"/><rect x="198" y="876" width="1" height="18" fill="#ff0000"/><rect x="196" y="876" width="5" height="19" fill="#ff0000"/><rect x="197" y="877" width="3" height="17" fill="#800000"/><rect x="205" y="888" width="1" height="17" fill="#ff0000"/><rect x="203" y="888" width="5" height="7" fill="#ff0000"/><rect x="204" y="889" width="3" height="5" fill="#800000"/><rect x="212" y="888" width="1" height="35" fill="#ff0000"/><rect x="210" y="894" width="5" height="25" fill="#ff0000"/><rect x="211" y="895" width="3" height="23" fill="#800000"/><rect x="219" y="900" width="1" height="23" fill="#00ff00"/><rect x="217" y="906" width="5" height="18" fill="#00ff00"/><rect x="218" y="907" width="3" height="16" fill="#008000"/><rect x="226" y="894" width="1" height="24" fill="#ff0000"/><rect x="224" y="900" width="5" height="19" fill="#ff0000"/><rect x="225" y="901" width="3" height="17" fill="#800000"/><rect x="233" y="894" width="1" height="24" fill="#00ff00"/><rect x="231" y="894" width="5" height="25" fill="#00ff00"/><rect x="232" y="895" width="3" height="23" fill="#008000"/><rect x="240" y="900" width="1" height="11" fill="#ff0000"/><rect x="237" y="900" width="7" height="1" fill="#ff0000"/><rect x="247" y="900" width="1" height="18" fill="#ff0000"/><rect x="245" y="906" width="5" height="13" fill="#ff0000"/><rect x="246" y="907" width="3" height="11" fill="#800000"/><rect x="254" y="900" width="1" height="18" fill="#00ff00"/><rect x="251" y="911" width="7" height="1" fill="#00ff00"/><rect x="261" y="894" width="1" height="23" fill="#00ff00"/><rect x="259" y="900" width="5" height="12" fill="#00ff00"/><rect x="260" y="901" width="3" height="10" fill="#008000"/><rect x="268" y="900" width="1" height="17" fill="#ff0000"/><rect x="265" y="906" width="7" height="1" fill="#ff0000"/><rect x="275" y="906" width="1" height="34" fill="#ff0000"/><rect x="273" y="906" width="5" height="13" fill="#ff0000"/><rect x="274" y="907" width="3" height="11" fill="#800000"/><rect x="282" y="906" width="1" height="23" fill="#ff0000"/><rect x="279" y="918" width="7" height="1" fill="#ff0000"/><rect x="289" y="906" width="1" height="28" fill="#ff0000"/><rect x="287" y="923" width="5" height="12" fill="#ff0000"/><rect x="288" y="924" width="3" height="10" fill="#800000"/><rect x="296" y="923" width="1" height="23" fill="#ff0000"/><rect x="294" y="929" width="5" height="6" fill="#ff0000"/><rect x="295" y="930" width="3" height="4" fill="#800000"/><rect x="303" y="929" width="1" height="17" fill="#ff0000"/><rect x="301" y="941" width="5" height="6" fill="#ff0000"/><rect x="302" y="942" width="3" height="4" fill="#800000"/><rect x="310" y="918" width="1" height="28" fill="#00ff00"/><rect x="308" y="923" width="5" height="19" fill="#00ff00"/><rect x="309" y="924" width="3" height="17" fill="#008000"/><rect x="317" y="894" width="1" height="34" fill="#00ff00"/><rect x="315" y="900" width="5" height="25" fill="#00ff00"/><rect x="316" y="901" width="3" height="23" fill="#008000"/><path d="M2457.5 174V1401.5" stroke="#fff" stroke-width="1.5"/><path d="M3 1401.5H2457.5" stroke="#fff" stroke-width="1.5"/><path d="M2457 256.6H2462" stroke="#fff" stroke-width="1.5"/><path d="M2457 351.8H2462" stroke="#fff" stroke-width="1.5"/><path d="M2457 447.1H2462" stroke="#fff" stroke-width="1.5"/><path d="M2457 542.3H2462" stroke="#fff" stroke-width="1.5"/><path d="M2457 637.6H2462" stroke="#fff" stroke-width="1.5"/><path d="M2457 732.8H2462" stroke="#fff" stroke-width="1.5"/><path d="M2457 828.0H2462" stroke="#fff" stroke-width="1.5"/><path d="M2457 923.3H2462" stroke="#fff" stroke-width="1.5"/><path d="M2457 1018.5H2462" stroke="#fff" stroke-width="1.5"/><path d="M2457 1113.8H2462" stroke="#fff" stroke-width="1.5"/><path d="M2457 1209.0H2462" stroke="#fff" stroke-width="1.5"/><path d="M2457 1304.2H2462" stroke="#fff" stroke-width="1.5"/><path d="M2457 1399.5H2462" stroke="#fff" stroke-width="1.5"/><path d="M9.4 1401V1405.5" stroke="#fff" stroke-width="1.5"/><path d="M107.4 1401V1405.5" stroke="#fff" stroke-width="1.5"/><path d="M184.5 1401V1405.5" stroke="#fff" stroke-width="1.5"/><path d="M261.5 1401V1405.5" stroke="#fff" stroke-width="1.5"/><path d="M338.5 1401V1405.5" stroke="#fff" stroke-width="1.5"/><path d="M415.5 1401V1405.5" stroke="#fff" stroke-width="1.5"/><path d="M492.5 1401V1405.5" stroke="#fff" stroke-width="1.5"/><path d="M569.5 1401V1405.5" stroke="#fff" stroke-width="1.5"/><path d="M674 1401V1405.5" stroke="#fff" stroke-width="1.5"/><path d="M736.3 1401V1405.5" stroke="#fff" stroke-width="1.5"/><path d="M800.7 1401V1405.5" stroke="#fff" stroke-width="1.5"/><path d="M862.9 1401V1405.5" stroke="#fff" stroke-width="1.5"/><path d="M926.3 1401V1405.5" stroke="#fff" stroke-width="1.5"/><path d="M989 1401V1405.5" stroke="#fff" stroke-width="1.5"/><path d="M1052 1401V1405.5" stroke="#fff" stroke-width="1.5"/><path d="M1114.7 1401V1405.5" stroke="#fff" stroke-width="1.5"/><path d="M1177.6 1401V1405.5" stroke="#fff" stroke-width="1.5"/><path d="M1241 1401V1405.5" stroke="#fff" stroke-width="1.5"/><path d="M1304 1401V1405.5" stroke="#fff" stroke-width="1.5"/><path d="M1366.8 1401V1405.5" stroke="#fff" stroke-width="1.5"/><path d="M1429.6 1401V1405.5" stroke="#fff" stroke-width="1.5"/><path d="M1492.4 1401V1405.5" stroke="#fff" stroke-width="1.5"/><path d="M1564 1401V1405.5" stroke="#fff" stroke-width="1.5"/><path d="M1641 1401V1405.5" stroke="#fff" stroke-width="1.5"/><path d="M1718 1401V1405.5" stroke="#fff" stroke-width="1.5"/><path d="M1794.9 1401V1405.5" stroke="#fff" stroke-width="1.5"/><path d="M1871.8 1401V1405.5" stroke="#fff" stroke-width="1.5"/><path d="M1948.8 1401V1405.5" stroke="#fff" stroke-width="1.5"/><path d="M2025.8 1401V1405.5" stroke="#fff" stroke-width="1.5"/><path d="M2102.8 1401V1405.5" stroke="#fff" stroke-width="1.5"/><path d="M2179.5 1401V1405.5" stroke="#fff" stroke-width="1.5"/><path d="M2256.6 1401V1405.5" stroke="#fff" stroke-width="1.5"/><path d="M2333.6 1401V1405.5" stroke="#fff" stroke-width="1.5"/><path d="M2410.4 1401V1405.5" stroke="#fff" stroke-width="1.5"/></svg>
<div class="t" style="left:2463.0px;top:245.9px;font-size:24px;line-height:24px;color:#fff;transform:scaleX(0.9338);transform-origin:0 0;">2748.00</div>
<div class="t" style="left:2463.0px;top:341.1px;font-size:24px;line-height:24px;color:#fff;transform:scaleX(0.9338);transform-origin:0 0;">2744.00</div>
<div class="t" style="left:2463.0px;top:436.4px;font-size:24px;line-height:24px;color:#fff;transform:scaleX(0.9338);transform-origin:0 0;">2740.00</div>
<div class="t" style="left:2463.0px;top:531.6px;font-size:24px;line-height:24px;color:#fff;transform:scaleX(0.9338);transform-origin:0 0;">2736.00</div>
<div class="t" style="left:2463.0px;top:626.8px;font-size:24px;line-height:24px;color:#fff;transform:scaleX(0.9338);transform-origin:0 0;">2732.00</div>
<div class="t" style="left:2463.0px;top:722.1px;font-size:24px;line-height:24px;color:#fff;transform:scaleX(0.9338);transform-origin:0 0;">2728.00</div>
<div class="t" style="left:2463.0px;top:817.3px;font-size:24px;line-height:24px;color:#fff;transform:scaleX(0.9338);transform-origin:0 0;">2724.00</div>
<div class="t" style="left:2463.0px;top:912.6px;font-size:24px;line-height:24px;color:#fff;transform:scaleX(0.9338);transform-origin:0 0;">2720.00</div>
<div class="t" style="left:2463.0px;top:1007.8px;font-size:24px;line-height:24px;color:#fff;transform:scaleX(0.9338);transform-origin:0 0;">2716.00</div>
<div class="t" style="left:2463.0px;top:1103.0px;font-size:24px;line-height:24px;color:#fff;transform:scaleX(0.9338);transform-origin:0 0;">2712.00</div>
<div class="t" style="left:2463.0px;top:1198.3px;font-size:24px;line-height:24px;color:#fff;transform:scaleX(0.9338);transform-origin:0 0;">2708.00</div>
<div class="t" style="left:2463.0px;top:1293.5px;font-size:24px;line-height:24px;color:#fff;transform:scaleX(0.9338);transform-origin:0 0;">2704.00</div>
<div class="t" style="left:2463.0px;top:1388.8px;font-size:24px;line-height:24px;color:#fff;transform:scaleX(0.9338);transform-origin:0 0;">2700.00</div>
<div class="a" style="left:2440px;top:1401.5px;width:118px;height:37px;background:#000c3c;"></div>
<div class="a" style="left:2461px;top:692px;width:85px;height:32px;background:#fff;"></div>
<div class="t" style="left:2463.5px;top:698.2px;font-size:24px;line-height:24px;color:#000;transform:scaleX(0.9338);transform-origin:0 0;">2729.00</div>
<div class="t" style="left:79.9px;top:1410.9px;font-size:24px;line-height:24px;color:#fff;transform:scaleX(0.9167);transform-origin:0 0;">12:15</div>
<div class="t" style="left:157.0px;top:1410.9px;font-size:24px;line-height:24px;color:#fff;transform:scaleX(0.9167);transform-origin:0 0;">13:10</div>
<div class="t" style="left:234.0px;top:1410.9px;font-size:24px;line-height:24px;color:#fff;transform:scaleX(0.9167);transform-origin:0 0;">14:05</div>
<div class="t" style="left:311.0px;top:1410.9px;font-size:24px;line-height:24px;color:#fff;transform:scaleX(0.9167);transform-origin:0 0;">15:00</div>
<div class="t" style="left:388.0px;top:1410.9px;font-size:24px;line-height:24px;color:#fff;transform:scaleX(0.9167);transform-origin:0 0;">15:55</div>
<div class="t" style="left:465.0px;top:1410.9px;font-size:24px;line-height:24px;color:#fff;transform:scaleX(0.9167);transform-origin:0 0;">16:50</div>
<div class="t" style="left:542.0px;top:1410.9px;font-size:24px;line-height:24px;color:#fff;transform:scaleX(0.9167);transform-origin:0 0;">17:45</div>
<div class="t" style="left:714.9px;top:1410.9px;font-size:24px;line-height:24px;color:#fff;transform:scaleX(0.9167);transform-origin:0 0;">0:45</div>
<div class="t" style="left:779.3px;top:1410.9px;font-size:24px;line-height:24px;color:#fff;transform:scaleX(0.9167);transform-origin:0 0;">1:30</div>
<div class="t" style="left:841.5px;top:1410.9px;font-size:24px;line-height:24px;color:#fff;transform:scaleX(0.9167);transform-origin:0 0;">2:15</div>
<div class="t" style="left:904.9px;top:1410.9px;font-size:24px;line-height:24px;color:#fff;transform:scaleX(0.9167);transform-origin:0 0;">3:00</div>
<div class="t" style="left:967.6px;top:1410.9px;font-size:24px;line-height:24px;color:#fff;transform:scaleX(0.9167);transform-origin:0 0;">3:45</div>
<div class="t" style="left:1030.6px;top:1410.9px;font-size:24px;line-height:24px;color:#fff;transform:scaleX(0.9167);transform-origin:0 0;">4:30</div>
<div class="t" style="left:1093.3px;top:1410.9px;font-size:24px;line-height:24px;color:#fff;transform:scaleX(0.9167);transform-origin:0 0;">5:15</div>
<div class="t" style="left:1156.2px;top:1410.9px;font-size:24px;line-height:24px;color:#fff;transform:scaleX(0.9167);transform-origin:0 0;">6:00</div>
<div class="t" style="left:1219.6px;top:1410.9px;font-size:24px;line-height:24px;color:#fff;transform:scaleX(0.9167);transform-origin:0 0;">6:45</div>
<div class="t" style="left:1282.6px;top:1410.9px;font-size:24px;line-height:24px;color:#fff;transform:scaleX(0.9167);transform-origin:0 0;">7:30</div>
<div class="t" style="left:1345.4px;top:1410.9px;font-size:24px;line-height:24px;color:#fff;transform:scaleX(0.9167);transform-origin:0 0;">8:15</div>
<div class="t" style="left:1408.2px;top:1410.9px;font-size:24px;line-height:24px;color:#fff;transform:scaleX(0.9167);transform-origin:0 0;">9:00</div>
<div class="t" style="left:1471.0px;top:1410.9px;font-size:24px;line-height:24px;color:#fff;transform:scaleX(0.9167);transform-origin:0 0;">9:45</div>
<div class="t" style="left:1536.5px;top:1410.9px;font-size:24px;line-height:24px;color:#fff;transform:scaleX(0.9167);transform-origin:0 0;">10:35</div>
<div class="t" style="left:1614.3px;top:1410.9px;font-size:24px;line-height:24px;color:#fff;transform:scaleX(0.9167);transform-origin:0 0;">11:30</div>
<div class="t" style="left:1690.5px;top:1410.9px;font-size:24px;line-height:24px;color:#fff;transform:scaleX(0.9167);transform-origin:0 0;">12:25</div>
<div class="t" style="left:1767.4px;top:1410.9px;font-size:24px;line-height:24px;color:#fff;transform:scaleX(0.9167);transform-origin:0 0;">13:20</div>
<div class="t" style="left:1844.3px;top:1410.9px;font-size:24px;line-height:24px;color:#fff;transform:scaleX(0.9167);transform-origin:0 0;">14:15</div>
<div class="t" style="left:1921.3px;top:1410.9px;font-size:24px;line-height:24px;color:#fff;transform:scaleX(0.9167);transform-origin:0 0;">15:10</div>
<div class="t" style="left:1998.3px;top:1410.9px;font-size:24px;line-height:24px;color:#fff;transform:scaleX(0.9167);transform-origin:0 0;">16:05</div>
<div class="t" style="left:2075.3px;top:1410.9px;font-size:24px;line-height:24px;color:#fff;transform:scaleX(0.9167);transform-origin:0 0;">17:00</div>
<div class="t" style="left:2152.0px;top:1410.9px;font-size:24px;line-height:24px;color:#fff;transform:scaleX(0.9167);transform-origin:0 0;">17:55</div>
<div class="t" style="left:2229.1px;top:1410.9px;font-size:24px;line-height:24px;color:#fff;transform:scaleX(0.9167);transform-origin:0 0;">18:50</div>
<div class="t" style="left:2306.1px;top:1410.9px;font-size:24px;line-height:24px;color:#fff;transform:scaleX(0.9167);transform-origin:0 0;">19:45</div>
<div class="t" style="left:2382.9px;top:1410.9px;font-size:24px;line-height:24px;color:#fff;transform:scaleX(0.9167);transform-origin:0 0;">20:40</div>
<div class="a" style="left:3px;top:1405px;width:56px;height:32px;background:#fff;"></div>
<div class="t" style="left:-0.5px;top:1410.9px;font-size:24px;line-height:24px;color:#000c3c;transform:scaleX(1.0264);transform-origin:0 0;">8-7-4</div>
<div class="a" style="left:0px;top:1400px;width:2px;height:40px;background:#a0a0a0;"></div>
<div class="a" style="left:2px;top:1400px;width:1px;height:38px;background:#f4f4f4;"></div>
<div class="a" style="left:655px;top:1405px;width:38px;height:32px;background:#fff;"></div>
<div class="t" style="left:658.1px;top:1410.9px;font-size:24px;line-height:24px;color:#000c3c;transform:scaleX(0.9167);transform-origin:0 0;">7-5</div>
<div class="a" style="left:2510px;top:1405px;width:47px;height:32px;background:#00c800;"></div>
<div class="t" style="left:2517.0px;top:1410.9px;font-size:24px;line-height:24px;color:#fff;transform:scaleX(0.9167);transform-origin:0 0;">6 E</div>
<div class="t" style="left:9.0px;top:180.4px;font-size:23.8px;line-height:23.8px;color:#fff;transform:scaleX(0.9839);transform-origin:0 0;">ESU8  5 Min   #1</div>
<div class="a" style="left:192px;top:174px;width:112px;height:32px;background:#fff;"></div>
<div class="t" style="left:194.0px;top:180.4px;font-size:23.8px;line-height:23.8px;color:#000c3c;transform:scaleX(0.9276);transform-origin:0 0;">C: 2729.00</div>
<div class="t" style="left:311.0px;top:180.4px;font-size:23.8px;line-height:23.8px;color:#fff;transform:scaleX(0.9608);transform-origin:0 0;">T: 5495</div>
<div class="a" style="left:393px;top:174px;width:102px;height:32px;background:#00c000;"></div>
<div class="t" style="left:395.0px;top:180.4px;font-size:23.8px;line-height:23.8px;color:#000c3c;transform:scaleX(0.9302);transform-origin:0 0;">Chg: 3.25</div>
<div class="a" style="left:500px;top:174px;width:130px;height:32px;background:#00c000;"></div>
<div class="t" style="left:502.0px;top:180.4px;font-size:23.8px;line-height:23.8px;color:#000c3c;transform:scaleX(0.9280);transform-origin:0 0;">DChg: 15.75</div>
<div class="t" style="left:635.0px;top:180.4px;font-size:23.8px;line-height:23.8px;color:#fff;transform:scaleX(0.9695);transform-origin:0 0;">2018-07-05 20:19:10 H: 2729.50 L: 2725.00 O: 2726.00 V: 13216 B: 2729.00 A: 2729.25 110x50 TP: 50- BV: 5043 AV: </div>
<div class="t" style="left:1854.0px;top:180.4px;font-size:23.8px;line-height:23.8px;color:#fff;transform:scaleX(0.9796);transform-origin:0 0;">7174 DV: 847021 VbP - 1 Days</div>
<div class="t" style="left:2192.7px;top:180.4px;font-size:23.8px;line-height:23.8px;color:#ff00ff;">Point of Control: 2728.50</div>
<div class="a" style="left:0px;top:1438px;width:2560px;height:82px;background:#f0f0f0;"></div>
<svg class="a" style="left:12px;top:1448px" width="14" height="16"><path d="M10 2L4 8L10 14" stroke="#606060" stroke-width="2.4" fill="none"/></svg>
<div class="a" style="left:2489px;top:1440px;width:32px;height:30px;background:#cdcdcd;"></div>
<svg class="a" style="left:2535px;top:1448px" width="14" height="16"><path d="M4 2L10 8L4 14" stroke="#606060" stroke-width="2.4" fill="none"/></svg>
<div class="a" style="left:0px;top:1477px;width:2560px;height:2px;background:#a0a0a0;"></div>
<div class="a" style="left:4px;top:1477px;width:191px;height:40px;background:#0078d7;box-sizing:border-box;border-right:2px solid #8a8a8a;"></div>
<div class="t" style="left:11.0px;top:1487.3px;font-size:22.4px;line-height:22.4px;color:#fff;transform:scaleX(1.0336);transform-origin:0 0;">ESU8  5 Min   #1</div>
<div class="a" style="left:0px;top:1518px;width:2560px;height:2px;background:#bdbdbd;"></div>
<div class="a" style="left:0px;top:1520px;width:2560px;height:80px;background:#050608;"></div>
<svg class="a" style="left:31px;top:1545px" width="34" height="34" viewBox="0 0 34 34"><path d="M0 4.5L14 2.5V16H0ZM15.5 2.3L34 0V16H15.5ZM0 17.5H14V31.5L0 29.5ZM15.5 17.5H34V34L15.5 31.7Z" fill="#fff"/></svg>
<svg class="a" style="left:126px;top:1540px" width="40" height="40" viewBox="0 0 40 40"><circle cx="24" cy="15" r="10" fill="none" stroke="#fff" stroke-width="2.2"/><path d="M17 22L4 35" stroke="#fff" stroke-width="2.6"/></svg>
<svg class="a" style="left:215px;top:1543px" width="50" height="32" viewBox="0 0 50 32"><rect x="1.5" y="7.5" width="8" height="17" fill="none" stroke="#fff" stroke-width="2"/><rect x="14" y="3" width="22" height="26" fill="none" stroke="#fff" stroke-width="2"/><rect x="40.5" y="7.5" width="8" height="17" fill="none" stroke="#fff" stroke-width="2"/></svg>
<svg class="a" style="left:320px;top:1537px" width="42" height="44" viewBox="0 0 42 44"><path d="M3 20C5 8 14 2 23 2C34 2 40 10 40 20V25H15C15 33 22 37 29 37C33 37 37 36 40 34V41C36 43 32 44 27 44C15 44 7 37 7 27C7 20 11 15 17 12C13 14 10 17 9 21C9 16 14 10 23 10C29 10 33 14 33 18H14" fill="#0a78d8"/><path d="M14 18H33C33 14 29 10 23 10C18 10 14 13 14 18Z" fill="#050608"/></svg>
<svg class="a" style="left:419px;top:1541px" width="44" height="38" viewBox="0 0 44 38"><path d="M1 3H15L18 6H42V10H1Z" fill="#eab648"/><rect x="4" y="4" width="10" height="2" fill="#fff" opacity="0.8"/><rect x="1" y="8" width="42" height="28" rx="1" fill="#fbe08f"/><path d="M9 36V21H35V36H29V27H15V36Z" fill="#33a7e8"/></svg>
<svg class="a" style="left:514px;top:1535px" width="48" height="48" viewBox="0 0 48 48"><path d="M17 14V8C17 3 31 3 31 8V14M20 14V9C20 5.5 28 5.5 28 9V14" fill="none" stroke="#fff" stroke-width="2.2"/><rect x="1" y="12" width="46" height="35" rx="1.5" fill="#fff"/><rect x="14" y="20" width="9.5" height="9.5" fill="#f25022"/><rect x="25" y="20" width="9.5" height="9.5" fill="#7fba00"/><rect x="14" y="31" width="9.5" height="9.5" fill="#00a4ef"/><rect x="25" y="31" width="9.5" height="9.5" fill="#ffb900"/></svg>
<svg class="a" style="left:612px;top:1540px" width="48" height="40" viewBox="0 0 48 40"><path d="M0 12L24 1L48 12V39H0Z" fill="#fff"/><path d="M0 12L24 28L48 12" fill="none" stroke="#050608" stroke-width="2.2"/><path d="M22 27L34 34L27 24Z" fill="#050608"/></svg>
<svg class="a" style="left:710px;top:1536px" width="50" height="48" viewBox="0 0 50 48"><path d="M8 38C2 26 6 10 20 6L18 12C10 16 8 26 12 34Z" fill="#a08070"/><path d="M14 10C20 4 30 4 34 10L28 14C24 10 20 10 18 12Z" fill="#7a6258"/><path d="M22 8L32 22L24 24L30 40L20 26L27 24Z" fill="#c8202e"/><path d="M34 4C44 8 48 20 44 30L38 28C42 20 40 12 32 8Z" fill="#b01828"/><text x="31" y="47" font-family="Liberation Sans" font-size="22" font-weight="bold" fill="#e8e8e8" stroke="#888" stroke-width="0.6">8</text></svg>
<svg class="a" style="left:810px;top:1537px" width="44" height="44" viewBox="0 0 30 30">
<defs><radialGradient id="tgo" cx="0.3" cy="0.35" r="0.8"><stop offset="0" stop-color="#bff0ff"/><stop offset="0.35" stop-color="#3fa8e8"/><stop offset="1" stop-color="#0a3c8c"/></radialGradient>
<radialGradient id="tgl" cx="0.45" cy="0.45" r="0.75"><stop offset="0" stop-color="#d8f060"/><stop offset="1" stop-color="#6aa820"/></radialGradient></defs>
<circle cx="15" cy="15" r="14.3" fill="url(#tgo)"/>
<path d="M9 2.2C14 0.5 22 1.5 26 5C29 9 30 15 29 19C27 24 23 28 19 29C18 26 19 23 17 21C15 19 13 20 11 18C8 17 7 15 7 13C8 11 10 10 12 10C11 8 9 7 8 5Z" fill="url(#tgl)"/>
<path d="M10 7C12 6 14 7 15 8M18 6C20 7 21 9 22 8" stroke="#9ad0e8" stroke-width="0.8" fill="none"/>
</svg>
<svg class="a" style="left:906px;top:1539px" width="48" height="46" viewBox="0 0 32 32"><path d="M9 2L30 4V22L9 20Z" fill="#d8e4f0" stroke="#7890a8" stroke-width="1"/><path d="M11 4.5L28 6V19.5L11 18Z" fill="#2a5fd8"/><path d="M13 5L27 6.5V12L13 11Z" fill="#6fa0f0"/><path d="M17 22L21 22.5L22 26L15 26Z" fill="#b8b8b8"/><ellipse cx="18" cy="27.5" rx="7" ry="2.5" fill="#c8c8c8"/><path d="M0.5 10.5L19 11.5L19 19L0.5 18Z" fill="#3a8ae8" stroke="#1c58b8" stroke-width="0.8"/><path d="M2.5 13H17M2.5 15.5H17M4 17.5H15M4 11.5V18M6.5 11.5V18M9 11.5V18M11.5 11.5V18M14 11.5V18" stroke="#e8f2ff" stroke-width="0.8"/></svg>
<div class="a" style="left:400px;top:1596px;width:80px;height:4px;background:#8ec6f5;"></div>
<div class="a" style="left:792px;top:1596px;width:80px;height:4px;background:#8ec6f5;"></div>
<div class="a" style="left:890px;top:1596px;width:80px;height:4px;background:#8ec6f5;"></div>
<svg class="a" style="left:2047px;top:1543px" width="34" height="34" viewBox="0 0 34 34"><circle cx="11" cy="17" r="5.5" fill="none" stroke="#fff" stroke-width="1.8"/><path d="M2 32C2 25 6 22 11 22C16 22 20 25 20 32" fill="none" stroke="#fff" stroke-width="1.8"/><circle cx="24" cy="8" r="5" fill="none" stroke="#fff" stroke-width="1.8"/><path d="M18 16C20 14 22 13 24 13C29 13 32 16 32 22" fill="none" stroke="#fff" stroke-width="1.8"/></svg>
<svg class="a" style="left:2122px;top:1548px" width="28" height="18"><path d="M2 16L14 4L26 16" stroke="#fff" stroke-width="2" fill="none"/></svg>
<svg class="a" style="left:2166px;top:1543px" width="36" height="30" viewBox="0 0 36 30"><rect x="9" y="9" width="24" height="14" fill="none" stroke="#fff" stroke-width="1.8"/><rect x="33" y="13" width="3" height="6" fill="#fff"/><rect x="12" y="12" width="8" height="8" fill="#fff"/><path d="M2 4V12M6 4V12M1 12H7V16L4 19V24" stroke="#fff" stroke-width="1.6" fill="none"/></svg>
<svg class="a" style="left:2214px;top:1541px" width="36" height="36" viewBox="0 0 36 36"><rect x="2" y="6" width="30" height="20" fill="none" stroke="#fff" stroke-width="1.8"/><path d="M17 26V32M8 33H26" stroke="#fff" stroke-width="1.8"/><rect x="2" y="2" width="8" height="8" fill="#050608" stroke="#fff" stroke-width="1.5"/></svg>
<svg class="a" style="left:2261px;top:1542px" width="36" height="34" viewBox="0 0 36 34"><path d="M2 12H8L16 5V29L8 22H2Z" fill="none" stroke="#fff" stroke-width="1.8"/><path d="M21 12C23 14 23 20 21 22M25 9C28 13 28 21 25 25" fill="none" stroke="#fff" stroke-width="1.8"/><path d="M29 6C33 12 33 22 29 28" fill="none" stroke="#888" stroke-width="1.8"/></svg>
<div class="t" style="left:2351.5px;top:1532.2px;font-size:22px;line-height:22px;color:#fff;">20:19</div>
<div class="t" style="left:2322.7px;top:1569.2px;font-size:22px;line-height:22px;color:#fff;">2018-07-05</div>
<svg class="a" style="left:2477px;top:1543px" width="36" height="34" viewBox="0 0 36 34"><path d="M2 2H33V24H20L13 31V24H2Z" fill="none" stroke="#fff" stroke-width="1.8"/></svg>
<div class="a" style="left:2550px;top:1520px;width:2px;height:80px;background:#6a6a6a;"></div>
<div class="a" style="left:314px;top:188px;width:1539px;height:1186px;background:#f0f0f0;box-sizing:border-box;border:1px solid #5a5a6a;box-shadow:0 0 6px rgba(0,0,0,0.35);"></div>
<div class="a" style="left:315px;top:189px;width:1537px;height:46px;background:#fff;"></div>
<div class="t" style="left:319.0px;top:199.7px;font-size:24.6px;line-height:24.6px;color:#999;transform:scaleX(0.9413);transform-origin:0 0;">Study Settings: VbP - 1 Days. ID:1</div>
<svg class="a" style="left:1808px;top:200px" width="22" height="22" viewBox="0 0 22 22"><path d="M1 1L21 21M21 1L1 21" stroke="#999" stroke-width="1.8"/></svg>
<div class="a" style="left:345px;top:301px;width:1479px;height:961px;box-sizing:border-box;border-top:1px solid #fff;border-left:1px solid #fff;border-right:2px solid #a0a0a0;border-bottom:2px solid #a0a0a0;"></div>
<div class="a" style="left:347px;top:265px;width:242px;height:37px;background:#f0f0f0;box-sizing:border-box;border-top:1px solid #fff;border-left:1px solid #fff;border-right:2px solid #a0a0a0;"></div>
<div class="t" style="left:353.0px;top:271.1px;font-size:27px;line-height:27px;color:#000;">Settings and Inputs</div>
<div class="a" style="left:591px;top:262px;width:145px;height:41px;background:#f0f0f0;box-sizing:border-box;border-top:1px solid #fff;border-left:1px solid #fff;border-right:2px solid #a0a0a0;"></div>
<div class="t" style="left:598.0px;top:269.1px;font-size:27px;line-height:27px;color:#000;">Subgraphs</div>
<div class="a" style="left:737px;top:265px;width:81px;height:37px;background:#f0f0f0;box-sizing:border-box;border-top:1px solid #fff;border-left:1px solid #fff;border-right:2px solid #a0a0a0;"></div>
<div class="t" style="left:741.0px;top:271.1px;font-size:27px;line-height:27px;color:#000;">Alerts</div>
<div class="t" style="left:374.6px;top:333.1px;font-size:27px;line-height:27px;color:#000;">Graph Draw Type:</div>
<div class="a" style="left:610px;top:321px;width:447px;height:38px;background:#fff;box-sizing:border-box;border-top:2px solid #8a8a8a;border-left:2px solid #8a8a8a;border-bottom:1px solid #fafafa;border-right:1px solid #fafafa;"></div><div class="a" style="left:1021px;top:323px;width:35px;height:35px;background:#f0f0f0;box-sizing:border-box;border-right:2px solid #8a8a8a;border-bottom:2px solid #8a8a8a;border-top:1px solid #fff;border-left:1px solid #fff;"></div><svg class="a" style="left:1029.5px;top:334.0px" width="18" height="12"><path d="M1 2.5H17L9 10.5Z" fill="#000"/></svg><div class="t" style="left:615.0px;top:328.1px;font-size:27px;line-height:27px;color:#000;">Volume by Price</div>
<svg class="a" style="left:1094px;top:332px" width="23" height="23" viewBox="0 0 23 23"><rect x="0" y="0" width="23" height="23" fill="#fff"/><path d="M0.5 23V0.5H23" stroke="#a0a0a0" stroke-width="1" fill="none"/><path d="M2 21.5V2H21.5" stroke="#696969" stroke-width="2" fill="none"/><path d="M2 21.5H21.5V2" stroke="#e3e3e3" stroke-width="1" fill="none"/><path d="M0.5 22.5H22.5V0.5" stroke="#fff" stroke-width="1" fill="none"/></svg>
<div class="t" style="left:1129.6px;top:333.1px;font-size:27px;line-height:27px;color:#000;">Use Chart Graphics Settings For Subgraph Colors</div>
<div class="a" style="left:375px;top:387px;width:1418px;height:325px;background:#fff;box-sizing:border-box;border-top:2px solid #8a8a8a;border-left:2px solid #8a8a8a;border-right:1px solid #fafafa;border-bottom:1px solid #fafafa;"></div>
<div class="a" style="left:377px;top:389px;width:1382px;height:33px;background:#f0f0f0;"></div>
<div class="a" style="left:377px;top:421px;width:1382px;height:2px;background:#a0a0a0;"></div>
<div class="a" style="left:615px;top:389px;width:1px;height:33px;background:#e3e3e3;"></div>
<div class="a" style="left:745px;top:389px;width:1px;height:33px;background:#e3e3e3;"></div>
<div class="a" style="left:865px;top:389px;width:1px;height:33px;background:#e3e3e3;"></div>
<div class="a" style="left:925px;top:389px;width:1px;height:33px;background:#e3e3e3;"></div>
<div class="a" style="left:1045px;top:389px;width:1px;height:33px;background:#e3e3e3;"></div>
<div class="t" style="left:381.5px;top:395.6px;font-size:27px;line-height:27px;color:#000;">Subgraph</div>
<div class="t" style="left:622.0px;top:395.6px;font-size:27px;line-height:27px;color:#000;">Draw S...</div>
<div class="t" style="left:752.0px;top:395.6px;font-size:27px;line-height:27px;color:#000;">Line St...</div>
<div class="t" style="left:872.0px;top:395.6px;font-size:27px;line-height:27px;color:#000;">W...</div>
<div class="t" style="left:932.0px;top:395.6px;font-size:27px;line-height:27px;color:#000;">Line L...</div>
<div class="a" style="left:410px;top:682px;width:636px;height:29px;background:#f0f0f0;"></div>
<div class="a" style="left:377px;top:457px;width:1382px;height:1px;background:#f0f0f0;"></div>
<div class="a" style="left:616px;top:424px;width:1px;height:32px;background:#f0f0f0;"></div>
<div class="a" style="left:746px;top:424px;width:1px;height:32px;background:#f0f0f0;"></div>
<div class="a" style="left:866px;top:424px;width:1px;height:32px;background:#f0f0f0;"></div>
<div class="a" style="left:926px;top:424px;width:1px;height:32px;background:#f0f0f0;"></div>
<div class="a" style="left:1046px;top:424px;width:1px;height:32px;background:#f0f0f0;"></div>
<div class="a" style="left:378px;top:426px;width:32px;height:15px;background:#ff00ff;"></div>
<div class="t" style="left:412.4px;top:430.1px;font-size:27px;line-height:27px;color:#000;">Point of Contr...</div>
<div class="t" style="left:622.0px;top:430.1px;font-size:27px;line-height:27px;color:#000;">Line</div>
<div class="t" style="left:752.0px;top:430.1px;font-size:27px;line-height:27px;color:#000;">Solid</div>
<div class="t" style="left:872.0px;top:430.1px;font-size:27px;line-height:27px;color:#000;">2</div>
<div class="t" style="left:932.0px;top:430.1px;font-size:27px;line-height:27px;color:#000;">-</div>
<div class="a" style="left:377px;top:489px;width:1382px;height:1px;background:#f0f0f0;"></div>
<div class="a" style="left:616px;top:457px;width:1px;height:32px;background:#f0f0f0;"></div>
<div class="a" style="left:746px;top:457px;width:1px;height:32px;background:#f0f0f0;"></div>
<div class="a" style="left:866px;top:457px;width:1px;height:32px;background:#f0f0f0;"></div>
<div class="a" style="left:926px;top:457px;width:1px;height:32px;background:#f0f0f0;"></div>
<div class="a" style="left:1046px;top:457px;width:1px;height:32px;background:#f0f0f0;"></div>
<div class="a" style="left:378px;top:459px;width:32px;height:15px;background:#00ffff;"></div>
<div class="t" style="left:412.4px;top:462.5px;font-size:27px;line-height:27px;color:#000;">Value Area Hi...</div>
<div class="t" style="left:622.0px;top:462.5px;font-size:27px;line-height:27px;color:#000;">Line</div>
<div class="t" style="left:752.0px;top:462.5px;font-size:27px;line-height:27px;color:#000;">Solid</div>
<div class="t" style="left:872.0px;top:462.5px;font-size:27px;line-height:27px;color:#000;">1</div>
<div class="t" style="left:932.0px;top:462.5px;font-size:27px;line-height:27px;color:#000;">-</div>
<div class="a" style="left:377px;top:521px;width:1382px;height:1px;background:#f0f0f0;"></div>
<div class="a" style="left:616px;top:489px;width:1px;height:32px;background:#f0f0f0;"></div>
<div class="a" style="left:746px;top:489px;width:1px;height:32px;background:#f0f0f0;"></div>
<div class="a" style="left:866px;top:489px;width:1px;height:32px;background:#f0f0f0;"></div>
<div class="a" style="left:926px;top:489px;width:1px;height:32px;background:#f0f0f0;"></div>
<div class="a" style="left:1046px;top:489px;width:1px;height:32px;background:#f0f0f0;"></div>
<div class="a" style="left:378px;top:491px;width:32px;height:15px;background:#808080;"></div>
<div class="t" style="left:412.4px;top:494.6px;font-size:27px;line-height:27px;color:#000;">Value Area Lo...</div>
<div class="t" style="left:622.0px;top:494.6px;font-size:27px;line-height:27px;color:#000;">Line</div>
<div class="t" style="left:752.0px;top:494.6px;font-size:27px;line-height:27px;color:#000;">Solid</div>
<div class="t" style="left:872.0px;top:494.6px;font-size:27px;line-height:27px;color:#000;">1</div>
<div class="t" style="left:932.0px;top:494.6px;font-size:27px;line-height:27px;color:#000;">-</div>
<div class="a" style="left:377px;top:553px;width:1382px;height:1px;background:#f0f0f0;"></div>
<div class="a" style="left:616px;top:521px;width:1px;height:32px;background:#f0f0f0;"></div>
<div class="a" style="left:746px;top:521px;width:1px;height:32px;background:#f0f0f0;"></div>
<div class="a" style="left:866px;top:521px;width:1px;height:32px;background:#f0f0f0;"></div>
<div class="a" style="left:926px;top:521px;width:1px;height:32px;background:#f0f0f0;"></div>
<div class="a" style="left:1046px;top:521px;width:1px;height:32px;background:#f0f0f0;"></div>
<div class="a" style="left:378px;top:523px;width:32px;height:15px;background:#0000ff;"></div>
<div class="t" style="left:412.4px;top:526.6px;font-size:27px;line-height:27px;color:#000;">Volume Weigh...</div>
<div class="t" style="left:622.0px;top:526.6px;font-size:27px;line-height:27px;color:#000;">Line</div>
<div class="t" style="left:752.0px;top:526.6px;font-size:27px;line-height:27px;color:#000;">Solid</div>
<div class="t" style="left:872.0px;top:526.6px;font-size:27px;line-height:27px;color:#000;">1</div>
<div class="t" style="left:932.0px;top:526.6px;font-size:27px;line-height:27px;color:#000;">-</div>
<div class="a" style="left:377px;top:586px;width:1382px;height:1px;background:#f0f0f0;"></div>
<div class="a" style="left:616px;top:553px;width:1px;height:32px;background:#f0f0f0;"></div>
<div class="a" style="left:746px;top:553px;width:1px;height:32px;background:#f0f0f0;"></div>
<div class="a" style="left:866px;top:553px;width:1px;height:32px;background:#f0f0f0;"></div>
<div class="a" style="left:926px;top:553px;width:1px;height:32px;background:#f0f0f0;"></div>
<div class="a" style="left:1046px;top:553px;width:1px;height:32px;background:#f0f0f0;"></div>
<div class="a" style="left:378px;top:555px;width:16px;height:15px;background:#600000;"></div>
<div class="a" style="left:395px;top:555px;width:16px;height:15px;background:#006000;"></div>
<div class="t" style="left:412.4px;top:559.0px;font-size:27px;line-height:27px;color:#000;">Bid Volume an...</div>
<div class="t" style="left:622.0px;top:559.0px;font-size:27px;line-height:27px;color:#000;">Ignore</div>
<div class="t" style="left:752.0px;top:559.0px;font-size:27px;line-height:27px;color:#000;">-</div>
<div class="t" style="left:872.0px;top:559.0px;font-size:27px;line-height:27px;color:#000;">-</div>
<div class="t" style="left:932.0px;top:559.0px;font-size:27px;line-height:27px;color:#000;">-</div>
<div class="a" style="left:377px;top:618px;width:1382px;height:1px;background:#f0f0f0;"></div>
<div class="a" style="left:616px;top:586px;width:1px;height:32px;background:#f0f0f0;"></div>
<div class="a" style="left:746px;top:586px;width:1px;height:32px;background:#f0f0f0;"></div>
<div class="a" style="left:866px;top:586px;width:1px;height:32px;background:#f0f0f0;"></div>
<div class="a" style="left:926px;top:586px;width:1px;height:32px;background:#f0f0f0;"></div>
<div class="a" style="left:1046px;top:586px;width:1px;height:32px;background:#f0f0f0;"></div>
<div class="a" style="left:395px;top:588px;width:16px;height:15px;background:#400080;"></div>
<div class="t" style="left:412.4px;top:591.1px;font-size:27px;line-height:27px;color:#000;">Volume Numb...</div>
<div class="t" style="left:622.0px;top:591.1px;font-size:27px;line-height:27px;color:#000;">Ignore</div>
<div class="t" style="left:752.0px;top:591.1px;font-size:27px;line-height:27px;color:#000;">-</div>
<div class="t" style="left:872.0px;top:591.1px;font-size:27px;line-height:27px;color:#000;">-</div>
<div class="t" style="left:932.0px;top:591.1px;font-size:27px;line-height:27px;color:#000;">-</div>
<div class="a" style="left:377px;top:650px;width:1382px;height:1px;background:#f0f0f0;"></div>
<div class="a" style="left:616px;top:618px;width:1px;height:32px;background:#f0f0f0;"></div>
<div class="a" style="left:746px;top:618px;width:1px;height:32px;background:#f0f0f0;"></div>
<div class="a" style="left:866px;top:618px;width:1px;height:32px;background:#f0f0f0;"></div>
<div class="a" style="left:926px;top:618px;width:1px;height:32px;background:#f0f0f0;"></div>
<div class="a" style="left:1046px;top:618px;width:1px;height:32px;background:#f0f0f0;"></div>
<div class="a" style="left:378px;top:620px;width:16px;height:15px;background:#606060;"></div>
<div class="a" style="left:395px;top:620px;width:16px;height:15px;background:#0000c8;"></div>
<div class="t" style="left:412.4px;top:623.5px;font-size:27px;line-height:27px;color:#000;">Volume Bars ...</div>
<div class="t" style="left:622.0px;top:623.5px;font-size:27px;line-height:27px;color:#000;">Ignore</div>
<div class="t" style="left:752.0px;top:623.5px;font-size:27px;line-height:27px;color:#000;">-</div>
<div class="t" style="left:872.0px;top:623.5px;font-size:27px;line-height:27px;color:#000;">-</div>
<div class="t" style="left:932.0px;top:623.5px;font-size:27px;line-height:27px;color:#000;">-</div>
<div class="a" style="left:377px;top:681px;width:1382px;height:1px;background:#f0f0f0;"></div>
<div class="a" style="left:616px;top:650px;width:1px;height:32px;background:#f0f0f0;"></div>
<div class="a" style="left:746px;top:650px;width:1px;height:32px;background:#f0f0f0;"></div>
<div class="a" style="left:866px;top:650px;width:1px;height:32px;background:#f0f0f0;"></div>
<div class="a" style="left:926px;top:650px;width:1px;height:32px;background:#f0f0f0;"></div>
<div class="a" style="left:1046px;top:650px;width:1px;height:32px;background:#f0f0f0;"></div>
<div class="a" style="left:378px;top:652px;width:16px;height:15px;background:#808080;"></div>
<div class="a" style="left:395px;top:652px;width:16px;height:15px;background:#606060;"></div>
<div class="t" style="left:412.4px;top:655.2px;font-size:27px;line-height:27px;color:#000;">Value Area an...</div>
<div class="t" style="left:622.0px;top:655.2px;font-size:27px;line-height:27px;color:#000;">Ignore</div>
<div class="t" style="left:752.0px;top:655.2px;font-size:27px;line-height:27px;color:#000;">-</div>
<div class="t" style="left:872.0px;top:655.2px;font-size:27px;line-height:27px;color:#000;">-</div>
<div class="t" style="left:932.0px;top:655.2px;font-size:27px;line-height:27px;color:#000;">-</div>
<div class="a" style="left:616px;top:681px;width:1px;height:30px;background:#f0f0f0;"></div>
<div class="a" style="left:746px;top:681px;width:1px;height:30px;background:#f0f0f0;"></div>
<div class="a" style="left:866px;top:681px;width:1px;height:30px;background:#f0f0f0;"></div>
<div class="a" style="left:926px;top:681px;width:1px;height:30px;background:#f0f0f0;"></div>
<div class="a" style="left:1046px;top:681px;width:1px;height:30px;background:#f0f0f0;"></div>
<div class="a" style="left:378px;top:683px;width:16px;height:15px;background:#606060;"></div>
<div class="a" style="left:395px;top:683px;width:16px;height:15px;background:#0000c8;"></div>
<div class="t" style="left:412.4px;top:686.9px;font-size:27px;line-height:27px;color:#000;">Evening Sessi...</div>
<div class="t" style="left:622.0px;top:686.9px;font-size:27px;line-height:27px;color:#000;">Ignore</div>
<div class="t" style="left:752.0px;top:686.9px;font-size:27px;line-height:27px;color:#000;">-</div>
<div class="t" style="left:872.0px;top:686.9px;font-size:27px;line-height:27px;color:#000;">-</div>
<div class="t" style="left:932.0px;top:686.9px;font-size:27px;line-height:27px;color:#000;">-</div>
<div class="a" style="left:377px;top:711px;width:1382px;height:1px;background:#f0f0f0;"></div>
<div class="a" style="left:1759px;top:389px;width:33px;height:322px;background:#f0f0f0;"></div>
<div class="a" style="left:1759px;top:423px;width:33px;height:120px;background:#cdcdcd;"></div>
<svg class="a" style="left:1767px;top:400px" width="18" height="14"><path d="M2 11L9 4L16 11" stroke="#606060" stroke-width="2.4" fill="none"/></svg>
<svg class="a" style="left:1767px;top:688px" width="18" height="14"><path d="M2 3L9 10L16 3" stroke="#606060" stroke-width="2.4" fill="none"/></svg>
<div class="a" style="left:374px;top:733px;width:1419px;height:359px;box-sizing:border-box;border:1px solid #b0b0b0;outline:1px solid #fff;outline-offset:-2px;"></div>
<div class="a" style="left:380px;top:725px;width:734px;height:16px;background:#f0f0f0;"></div>
<div class="t" style="left:385.0px;top:721.6px;font-size:27px;line-height:27px;color:#000;">Evening Session Volume Bars Outline and Fill Colors (SG11)</div>
<div class="t" style="left:398.5px;top:752.6px;font-size:27px;line-height:27px;color:#000;">Color:</div>
<div class="a" style="left:406px;top:784px;width:48px;height:45px;background:#606060;box-sizing:border-box;border:3px solid #f0f0f0;box-shadow:0 0 0 1px #b4b4b4, 1px 1px 0 1px #8a8a8a;"></div>
<div class="a" style="left:462px;top:784px;width:48px;height:45px;background:#0000c8;box-sizing:border-box;border:3px solid #f0f0f0;box-shadow:0 0 0 1px #b4b4b4, 1px 1px 0 1px #8a8a8a;"></div>
<div class="t" style="left:534.7px;top:752.6px;font-size:27px;line-height:27px;color:#000;">Draw Style:</div>
<div class="a" style="left:534px;top:784px;width:287px;height:37px;background:#fff;box-sizing:border-box;border-top:2px solid #8a8a8a;border-left:2px solid #8a8a8a;border-bottom:1px solid #fafafa;border-right:1px solid #fafafa;"></div><div class="a" style="left:785px;top:786px;width:35px;height:34px;background:#f0f0f0;box-sizing:border-box;border-right:2px solid #8a8a8a;border-bottom:2px solid #8a8a8a;border-top:1px solid #fff;border-left:1px solid #fff;"></div><svg class="a" style="left:793.5px;top:796.5px" width="18" height="12"><path d="M1 2.5H17L9 10.5Z" fill="#000"/></svg><div class="t" style="left:539.0px;top:790.6px;font-size:27px;line-height:27px;color:#000;">Ignore</div>
<div class="t" style="left:846.5px;top:752.6px;font-size:27px;line-height:27px;color:#a0a0a0;">Line Style:</div>
<div class="a" style="left:846px;top:784px;width:223px;height:37px;background:#f0f0f0;box-sizing:border-box;border-top:2px solid #8a8a8a;border-left:2px solid #8a8a8a;border-bottom:1px solid #fafafa;border-right:1px solid #fafafa;"></div><div class="a" style="left:1033px;top:786px;width:35px;height:34px;background:#f0f0f0;box-sizing:border-box;border-right:2px solid #8a8a8a;border-bottom:2px solid #8a8a8a;border-top:1px solid #fff;border-left:1px solid #fff;"></div><svg class="a" style="left:1041.5px;top:796.5px" width="18" height="12"><path d="M1 2.5H17L9 10.5Z" fill="#a0a0a0"/></svg>
<div class="t" style="left:1094.0px;top:752.0px;font-size:27px;line-height:27px;color:#a0a0a0;">Width/Size:</div>
<div class="a" style="left:1094px;top:784px;width:118px;height:45px;background:#f0f0f0;box-sizing:border-box;border-top:2px solid #8a8a8a;border-left:2px solid #8a8a8a;border-bottom:1px solid #fafafa;border-right:1px solid #fafafa;"></div><div class="a" style="left:1179px;top:786px;width:31px;height:20px;background:#f0f0f0;box-sizing:border-box;border-right:2px solid #8a8a8a;border-bottom:2px solid #8a8a8a;border-top:1px solid #fff;border-left:1px solid #fff;"></div><svg class="a" style="left:1188.0px;top:790.8px" width="14" height="11"><path d="M3 8H11L7 3Z" fill="#a0a0a0"/></svg><div class="a" style="left:1179px;top:806px;width:31px;height:20px;background:#f0f0f0;box-sizing:border-box;border-right:2px solid #8a8a8a;border-bottom:2px solid #8a8a8a;border-top:1px solid #fff;border-left:1px solid #fff;"></div><svg class="a" style="left:1188.0px;top:811.2px" width="14" height="11"><path d="M3 3H11L7 8Z" fill="#a0a0a0"/></svg><div class="t" style="left:1099.0px;top:794.6px;font-size:27px;line-height:27px;color:#7a7a7a;">0</div>
<div class="t" style="left:398.5px;top:833.6px;font-size:27px;line-height:27px;color:#000;">Auto-Coloring:</div>
<div class="a" style="left:398px;top:864px;width:211px;height:37px;background:#fff;box-sizing:border-box;border-top:2px solid #8a8a8a;border-left:2px solid #8a8a8a;border-bottom:1px solid #fafafa;border-right:1px solid #fafafa;"></div><div class="a" style="left:573px;top:866px;width:35px;height:34px;background:#f0f0f0;box-sizing:border-box;border-right:2px solid #8a8a8a;border-bottom:2px solid #8a8a8a;border-top:1px solid #fff;border-left:1px solid #fff;"></div><svg class="a" style="left:581.5px;top:876.5px" width="18" height="12"><path d="M1 2.5H17L9 10.5Z" fill="#000"/></svg><div class="t" style="left:403.0px;top:870.6px;font-size:27px;line-height:27px;color:#000;">None</div>
<svg class="a" style="left:631px;top:837px" width="23" height="23" viewBox="0 0 23 23"><rect x="0" y="0" width="23" height="23" fill="#fff"/><path d="M0.5 23V0.5H23" stroke="#a0a0a0" stroke-width="1" fill="none"/><path d="M2 21.5V2H21.5" stroke="#696969" stroke-width="2" fill="none"/><path d="M2 21.5H21.5V2" stroke="#e3e3e3" stroke-width="1" fill="none"/><path d="M0.5 22.5H22.5V0.5" stroke="#fff" stroke-width="1" fill="none"/></svg>
<div class="t" style="left:664.6px;top:837.3px;font-size:27px;line-height:27px;color:#000;">Label</div>
<div class="a" style="left:775px;top:831px;width:47px;height:45px;background:#a0a0a0;box-sizing:border-box;border:3px solid #f0f0f0;box-shadow:0 0 0 1px #b4b4b4, 1px 1px 0 1px #8a8a8a;"></div>
<div class="t" style="left:846.5px;top:832.3px;font-size:27px;line-height:27px;color:#a0a0a0;">Text to Draw:</div>
<div class="a" style="left:846px;top:864px;width:223px;height:47px;background:#f0f0f0;box-sizing:border-box;border-top:2px solid #a0a0a0;border-left:2px solid #a0a0a0;border-bottom:1px solid #fafafa;border-right:1px solid #fafafa;"></div>
<svg class="a" style="left:631px;top:900px" width="23" height="23" viewBox="0 0 23 23"><rect x="0" y="0" width="23" height="23" fill="#fff"/><path d="M0.5 23V0.5H23" stroke="#a0a0a0" stroke-width="1" fill="none"/><path d="M2 21.5V2H21.5" stroke="#696969" stroke-width="2" fill="none"/><path d="M2 21.5H21.5V2" stroke="#e3e3e3" stroke-width="1" fill="none"/><path d="M0.5 22.5H22.5V0.5" stroke="#fff" stroke-width="1" fill="none"/><path d="M6 10.5 L9.8 14.5 L16.5 6.5" stroke="#000" stroke-width="3" fill="none"/></svg>
<div class="t" style="left:664.6px;top:883.6px;font-size:27px;line-height:27px;color:#000;">Include in</div>
<div class="t" style="left:664.6px;top:914.6px;font-size:27px;line-height:27px;color:#000;">Summary</div>
<div class="t" style="left:398.5px;top:925.6px;font-size:27px;line-height:27px;color:#000;">Short Name:</div>
<div class="a" style="left:398px;top:957px;width:423px;height:46px;background:#fff;box-sizing:border-box;border-top:2px solid #8a8a8a;border-left:2px solid #8a8a8a;border-bottom:1px solid #fafafa;border-right:1px solid #fafafa;"></div>
<div class="t" style="left:846.5px;top:922.6px;font-size:27px;line-height:27px;color:#000;">Displacement:</div>
<div class="a" style="left:846px;top:957px;width:223px;height:46px;background:#f0f0f0;box-sizing:border-box;border-top:2px solid #8a8a8a;border-left:2px solid #8a8a8a;border-bottom:1px solid #fafafa;border-right:1px solid #fafafa;"></div><div class="a" style="left:1036px;top:959px;width:31px;height:21px;background:#f0f0f0;box-sizing:border-box;border-right:2px solid #8a8a8a;border-bottom:2px solid #8a8a8a;border-top:1px solid #fff;border-left:1px solid #fff;"></div><svg class="a" style="left:1045.0px;top:964.0px" width="14" height="11"><path d="M3 8H11L7 3Z" fill="#a0a0a0"/></svg><div class="a" style="left:1036px;top:980px;width:31px;height:21px;background:#f0f0f0;box-sizing:border-box;border-right:2px solid #8a8a8a;border-bottom:2px solid #8a8a8a;border-top:1px solid #fff;border-left:1px solid #fff;"></div><svg class="a" style="left:1045.0px;top:985.0px" width="14" height="11"><path d="M3 3H11L7 8Z" fill="#a0a0a0"/></svg><div class="t" style="left:851.0px;top:968.1px;font-size:27px;line-height:27px;color:#7a7a7a;">0</div>
<div class="a" style="left:1242px;top:763px;width:262px;height:236px;box-sizing:border-box;border:1px solid #b0b0b0;outline:1px solid #fff;outline-offset:-2px;"></div>
<div class="a" style="left:1251px;top:750px;width:7px;height:26px;background:#f0f0f0;"></div>
<div class="a" style="left:1255px;top:755px;width:2.5px;height:20px;background:#202020;"></div>
<div class="a" style="left:1279px;top:755px;width:185px;height:16px;background:#f0f0f0;"></div>
<svg class="a" style="left:1258px;top:752px" width="23" height="23" viewBox="0 0 23 23"><rect x="0" y="0" width="23" height="23" fill="#f0f0f0"/><path d="M0.5 23V0.5H23" stroke="#a0a0a0" stroke-width="1" fill="none"/><path d="M2 21.5V2H21.5" stroke="#696969" stroke-width="2" fill="none"/><path d="M2 21.5H21.5V2" stroke="#e3e3e3" stroke-width="1" fill="none"/><path d="M0.5 22.5H22.5V0.5" stroke="#fff" stroke-width="1" fill="none"/></svg>
<div class="t" style="left:1293.0px;top:752.0px;font-size:27px;line-height:27px;color:#a0a0a0;">Name Label:</div>
<svg class="a" style="left:1258px;top:794px" width="23" height="23" viewBox="0 0 23 23"><rect x="0" y="0" width="23" height="23" fill="#f0f0f0"/><path d="M0.5 23V0.5H23" stroke="#a0a0a0" stroke-width="1" fill="none"/><path d="M2 21.5V2H21.5" stroke="#696969" stroke-width="2" fill="none"/><path d="M2 21.5H21.5V2" stroke="#e3e3e3" stroke-width="1" fill="none"/><path d="M0.5 22.5H22.5V0.5" stroke="#fff" stroke-width="1" fill="none"/></svg>
<div class="t" style="left:1293.0px;top:794.3px;font-size:27px;line-height:27px;color:#a0a0a0;">Reverse Colors</div>
<div class="t" style="left:1258.8px;top:824.1px;font-size:27px;line-height:27px;color:#000;">Horizontal Align:</div>
<div class="a" style="left:1259px;top:857px;width:229px;height:37px;background:#f0f0f0;box-sizing:border-box;border-top:2px solid #8a8a8a;border-left:2px solid #8a8a8a;border-bottom:1px solid #fafafa;border-right:1px solid #fafafa;"></div><div class="a" style="left:1452px;top:859px;width:35px;height:34px;background:#f0f0f0;box-sizing:border-box;border-right:2px solid #8a8a8a;border-bottom:2px solid #8a8a8a;border-top:1px solid #fff;border-left:1px solid #fff;"></div><svg class="a" style="left:1460.5px;top:869.5px" width="18" height="12"><path d="M1 2.5H17L9 10.5Z" fill="#a0a0a0"/></svg><div class="t" style="left:1264.0px;top:863.6px;font-size:27px;line-height:27px;color:#7a7a7a;">Right Edge</div>
<div class="t" style="left:1258.8px;top:914.0px;font-size:27px;line-height:27px;color:#000;">Vertical Align:</div>
<div class="a" style="left:1259px;top:950px;width:229px;height:37px;background:#f0f0f0;box-sizing:border-box;border-top:2px solid #8a8a8a;border-left:2px solid #8a8a8a;border-bottom:1px solid #fafafa;border-right:1px solid #fafafa;"></div><div class="a" style="left:1452px;top:952px;width:35px;height:34px;background:#f0f0f0;box-sizing:border-box;border-right:2px solid #8a8a8a;border-bottom:2px solid #8a8a8a;border-top:1px solid #fff;border-left:1px solid #fff;"></div><svg class="a" style="left:1460.5px;top:962.5px" width="18" height="12"><path d="M1 2.5H17L9 10.5Z" fill="#a0a0a0"/></svg><div class="t" style="left:1264.0px;top:956.6px;font-size:27px;line-height:27px;color:#7a7a7a;">Centered</div>
<div class="a" style="left:1514px;top:763px;width:263px;height:236px;box-sizing:border-box;border:1px solid #b0b0b0;outline:1px solid #fff;outline-offset:-2px;"></div>
<div class="a" style="left:1522px;top:755px;width:250px;height:16px;background:#f0f0f0;"></div>
<div class="t" style="left:1522.0px;top:752.0px;font-size:27px;line-height:27px;color:#000;clip-path:inset(0 0 0 0);">V</div>
<svg class="a" style="left:1530px;top:752px" width="23" height="23" viewBox="0 0 23 23"><rect x="0" y="0" width="23" height="23" fill="#f0f0f0"/><path d="M0.5 23V0.5H23" stroke="#a0a0a0" stroke-width="1" fill="none"/><path d="M2 21.5V2H21.5" stroke="#696969" stroke-width="2" fill="none"/><path d="M2 21.5H21.5V2" stroke="#e3e3e3" stroke-width="1" fill="none"/><path d="M0.5 22.5H22.5V0.5" stroke="#fff" stroke-width="1" fill="none"/></svg>
<div class="t" style="left:1564.3px;top:752.0px;font-size:27px;line-height:27px;color:#a0a0a0;">Value Label:</div>
<svg class="a" style="left:1530px;top:794px" width="23" height="23" viewBox="0 0 23 23"><rect x="0" y="0" width="23" height="23" fill="#f0f0f0"/><path d="M0.5 23V0.5H23" stroke="#a0a0a0" stroke-width="1" fill="none"/><path d="M2 21.5V2H21.5" stroke="#696969" stroke-width="2" fill="none"/><path d="M2 21.5H21.5V2" stroke="#e3e3e3" stroke-width="1" fill="none"/><path d="M0.5 22.5H22.5V0.5" stroke="#fff" stroke-width="1" fill="none"/></svg>
<div class="t" style="left:1564.3px;top:794.3px;font-size:27px;line-height:27px;color:#a0a0a0;">Reverse Colors</div>
<div class="t" style="left:1530.6px;top:824.1px;font-size:27px;line-height:27px;color:#000;">Horizontal Align:</div>
<div class="a" style="left:1531px;top:857px;width:230px;height:37px;background:#f0f0f0;box-sizing:border-box;border-top:2px solid #8a8a8a;border-left:2px solid #8a8a8a;border-bottom:1px solid #fafafa;border-right:1px solid #fafafa;"></div><div class="a" style="left:1725px;top:859px;width:35px;height:34px;background:#f0f0f0;box-sizing:border-box;border-right:2px solid #8a8a8a;border-bottom:2px solid #8a8a8a;border-top:1px solid #fff;border-left:1px solid #fff;"></div><svg class="a" style="left:1733.5px;top:869.5px" width="18" height="12"><path d="M1 2.5H17L9 10.5Z" fill="#a0a0a0"/></svg><div class="t" style="left:1536.0px;top:863.6px;font-size:27px;line-height:27px;color:#7a7a7a;">Values Scale</div>
<div class="t" style="left:1530.6px;top:914.0px;font-size:27px;line-height:27px;color:#000;">Vertical Align:</div>
<div class="a" style="left:1531px;top:950px;width:230px;height:37px;background:#f0f0f0;box-sizing:border-box;border-top:2px solid #8a8a8a;border-left:2px solid #8a8a8a;border-bottom:1px solid #fafafa;border-right:1px solid #fafafa;"></div><div class="a" style="left:1725px;top:952px;width:35px;height:34px;background:#f0f0f0;box-sizing:border-box;border-right:2px solid #8a8a8a;border-bottom:2px solid #8a8a8a;border-top:1px solid #fff;border-left:1px solid #fff;"></div><svg class="a" style="left:1733.5px;top:962.5px" width="18" height="12"><path d="M1 2.5H17L9 10.5Z" fill="#a0a0a0"/></svg><div class="t" style="left:1536.0px;top:956.6px;font-size:27px;line-height:27px;color:#7a7a7a;">Centered</div>
<svg class="a" style="left:387px;top:1019px" width="23" height="23" viewBox="0 0 23 23"><rect x="0" y="0" width="23" height="23" fill="#fff"/><path d="M0.5 23V0.5H23" stroke="#a0a0a0" stroke-width="1" fill="none"/><path d="M2 21.5V2H21.5" stroke="#696969" stroke-width="2" fill="none"/><path d="M2 21.5H21.5V2" stroke="#e3e3e3" stroke-width="1" fill="none"/><path d="M0.5 22.5H22.5V0.5" stroke="#fff" stroke-width="1" fill="none"/></svg>
<div class="t" style="left:420.7px;top:1019.1px;font-size:27px;line-height:27px;color:#000;">Display Name and Value in Chart Values Windows</div>
<svg class="a" style="left:1087px;top:1019px" width="23" height="23" viewBox="0 0 23 23"><rect x="0" y="0" width="23" height="23" fill="#fff"/><path d="M0.5 23V0.5H23" stroke="#a0a0a0" stroke-width="1" fill="none"/><path d="M2 21.5V2H21.5" stroke="#696969" stroke-width="2" fill="none"/><path d="M2 21.5H21.5V2" stroke="#e3e3e3" stroke-width="1" fill="none"/><path d="M0.5 22.5H22.5V0.5" stroke="#fff" stroke-width="1" fill="none"/></svg>
<div class="t" style="left:1120.7px;top:1019.1px;font-size:27px;line-height:27px;color:#000;">Display Name and Value in Region Data Line</div>
<svg class="a" style="left:387px;top:1058px" width="23" height="23" viewBox="0 0 23 23"><rect x="0" y="0" width="23" height="23" fill="#fff"/><path d="M0.5 23V0.5H23" stroke="#a0a0a0" stroke-width="1" fill="none"/><path d="M2 21.5V2H21.5" stroke="#696969" stroke-width="2" fill="none"/><path d="M2 21.5H21.5V2" stroke="#e3e3e3" stroke-width="1" fill="none"/><path d="M0.5 22.5H22.5V0.5" stroke="#fff" stroke-width="1" fill="none"/><path d="M6 10.5 L9.8 14.5 L16.5 6.5" stroke="#000" stroke-width="3" fill="none"/></svg>
<div class="t" style="left:420.7px;top:1057.1px;font-size:27px;line-height:27px;color:#000;">Include in Spreadsheet</div>
<svg class="a" style="left:398px;top:1115px" width="23" height="23" viewBox="0 0 23 23"><rect x="0" y="0" width="23" height="23" fill="#fff"/><path d="M0.5 23V0.5H23" stroke="#a0a0a0" stroke-width="1" fill="none"/><path d="M2 21.5V2H21.5" stroke="#696969" stroke-width="2" fill="none"/><path d="M2 21.5H21.5V2" stroke="#e3e3e3" stroke-width="1" fill="none"/><path d="M0.5 22.5H22.5V0.5" stroke="#fff" stroke-width="1" fill="none"/><path d="M6 10.5 L9.8 14.5 L16.5 6.5" stroke="#000" stroke-width="3" fill="none"/></svg>
<div class="t" style="left:433.0px;top:1114.6px;font-size:27px;line-height:27px;color:#000;">Display Study Name in Region Data Line</div>
<svg class="a" style="left:398px;top:1155px" width="23" height="23" viewBox="0 0 23 23"><rect x="0" y="0" width="23" height="23" fill="#fff"/><path d="M0.5 23V0.5H23" stroke="#a0a0a0" stroke-width="1" fill="none"/><path d="M2 21.5V2H21.5" stroke="#696969" stroke-width="2" fill="none"/><path d="M2 21.5H21.5V2" stroke="#e3e3e3" stroke-width="1" fill="none"/><path d="M0.5 22.5H22.5V0.5" stroke="#fff" stroke-width="1" fill="none"/><path d="M6 10.5 L9.8 14.5 L16.5 6.5" stroke="#000" stroke-width="3" fill="none"/></svg>
<div class="t" style="left:433.0px;top:1153.6px;font-size:27px;line-height:27px;color:#000;">Display Study Input Values</div>
<svg class="a" style="left:398px;top:1196px" width="23" height="23" viewBox="0 0 23 23"><rect x="0" y="0" width="23" height="23" fill="#fff"/><path d="M0.5 23V0.5H23" stroke="#a0a0a0" stroke-width="1" fill="none"/><path d="M2 21.5V2H21.5" stroke="#696969" stroke-width="2" fill="none"/><path d="M2 21.5H21.5V2" stroke="#e3e3e3" stroke-width="1" fill="none"/><path d="M0.5 22.5H22.5V0.5" stroke="#fff" stroke-width="1" fill="none"/><path d="M6 10.5 L9.8 14.5 L16.5 6.5" stroke="#000" stroke-width="3" fill="none"/></svg>
<div class="t" style="left:433.0px;top:1196.2px;font-size:27px;line-height:27px;color:#000;">Always Show Values</div>
<div class="a" style="left:344px;top:1266px;width:200px;height:54px;background:#f0f0f0;box-sizing:border-box;border-top:1px solid #fff;border-left:1px solid #fff;border-right:2px solid #8a8a8a;border-bottom:2px solid #8a8a8a;"></div>
<div class="t" style="left:424.0px;top:1280.1px;font-size:27px;line-height:27px;color:#000;">OK</div>
<div class="a" style="left:560px;top:1266px;width:200px;height:54px;background:#f0f0f0;box-sizing:border-box;border-top:1px solid #fff;border-left:1px solid #fff;border-right:2px solid #8a8a8a;border-bottom:2px solid #8a8a8a;"></div>
<div class="a" style="left:584px;top:1116px;width:1590px;height:295px;background:#1b1b1b;box-sizing:border-box;border:1px solid #505060;box-shadow:0 0 8px rgba(0,0,0,0.4);"></div>
<div class="a" style="left:585px;top:1117px;width:1588px;height:56px;background:#fff;"></div>
<svg class="a" style="left:597px;top:1127px" width="32" height="32" viewBox="0 0 32 32"><path d="M9 2L30 4V22L9 20Z" fill="#d8e4f0" stroke="#7890a8" stroke-width="1"/><path d="M11 4.5L28 6V19.5L11 18Z" fill="#2a5fd8"/><path d="M13 5L27 6.5V12L13 11Z" fill="#6fa0f0"/><path d="M17 22L21 22.5L22 26L15 26Z" fill="#b8b8b8"/><ellipse cx="18" cy="27.5" rx="7" ry="2.5" fill="#c8c8c8"/><path d="M0.5 10.5L19 11.5L19 19L0.5 18Z" fill="#3a8ae8" stroke="#1c58b8" stroke-width="0.8"/><path d="M2.5 13H17M2.5 15.5H17M4 17.5H15M4 11.5V18M6.5 11.5V18M9 11.5V18M11.5 11.5V18M14 11.5V18" stroke="#e8f2ff" stroke-width="0.8"/></svg>
<div class="t" style="left:635.5px;top:1133.3px;font-size:24.4px;line-height:24.4px;color:#999;transform:scaleX(0.9906);transform-origin:0 0;">Skärmtangentbordet</div>
<div class="a" style="left:1932px;top:1143px;width:20px;height:2px;background:#777;"></div>
<div class="a" style="left:2023px;top:1134px;width:20px;height:20px;box-sizing:border-box;border:1.5px solid #ccc;"></div>
<svg class="a" style="left:2115px;top:1133px" width="22" height="22" viewBox="0 0 22 22"><path d="M1 1L21 21M21 1L1 21" stroke="#777" stroke-width="1.6"/></svg>
<div class="a" style="left:589px;top:1217px;width:77px;height:35px;background:#333333;"></div>
<div class="t" style="left:594.0px;top:1220.4px;font-size:19px;line-height:19px;color:#fff;">Esc</div>
<div class="a" style="left:670px;top:1217px;width:77px;height:35px;background:#333333;"></div>
<div class="t" style="left:675.0px;top:1221.1px;font-size:14px;line-height:14px;color:#9a9a9a;">½</div>
<div class="t" style="left:706.2px;top:1229.9px;font-size:19px;line-height:19px;color:#fff;">§</div>
<div class="a" style="left:751px;top:1217px;width:77px;height:35px;background:#333333;"></div>
<div class="t" style="left:756.0px;top:1221.1px;font-size:14px;line-height:14px;color:#9a9a9a;">!</div>
<div class="t" style="left:787.2px;top:1229.9px;font-size:19px;line-height:19px;color:#fff;">1</div>
<div class="a" style="left:832px;top:1217px;width:77px;height:35px;background:#333333;"></div>
<div class="t" style="left:837.0px;top:1221.1px;font-size:14px;line-height:14px;color:#9a9a9a;">"</div>
<div class="t" style="left:868.2px;top:1229.9px;font-size:19px;line-height:19px;color:#fff;">2</div>
<div class="a" style="left:913px;top:1217px;width:77px;height:35px;background:#333333;"></div>
<div class="t" style="left:918.0px;top:1221.1px;font-size:14px;line-height:14px;color:#9a9a9a;">#</div>
<div class="t" style="left:949.2px;top:1229.9px;font-size:19px;line-height:19px;color:#fff;">3</div>
<div class="a" style="left:994px;top:1217px;width:77px;height:35px;background:#333333;"></div>
<div class="t" style="left:999.0px;top:1221.1px;font-size:14px;line-height:14px;color:#9a9a9a;">¤</div>
<div class="t" style="left:1030.2px;top:1229.9px;font-size:19px;line-height:19px;color:#fff;">4</div>
<div class="a" style="left:1075px;top:1217px;width:77px;height:35px;background:#333333;"></div>
<div class="t" style="left:1080.0px;top:1221.1px;font-size:14px;line-height:14px;color:#9a9a9a;">%</div>
<div class="t" style="left:1111.2px;top:1229.9px;font-size:19px;line-height:19px;color:#fff;">5</div>
<div class="a" style="left:1156px;top:1217px;width:77px;height:35px;background:#333333;"></div>
<div class="t" style="left:1161.0px;top:1221.1px;font-size:14px;line-height:14px;color:#9a9a9a;">&amp;</div>
<div class="t" style="left:1192.2px;top:1229.9px;font-size:19px;line-height:19px;color:#fff;">6</div>
<div class="a" style="left:1237px;top:1217px;width:77px;height:35px;background:#333333;"></div>
<div class="t" style="left:1242.0px;top:1221.1px;font-size:14px;line-height:14px;color:#9a9a9a;">/</div>
<div class="t" style="left:1273.2px;top:1229.9px;font-size:19px;line-height:19px;color:#fff;">7</div>
<div class="a" style="left:1318px;top:1217px;width:77px;height:35px;background:#333333;"></div>
<div class="t" style="left:1323.0px;top:1221.1px;font-size:14px;line-height:14px;color:#9a9a9a;">(</div>
<div class="t" style="left:1354.2px;top:1229.9px;font-size:19px;line-height:19px;color:#fff;">8</div>
<div class="a" style="left:1399px;top:1217px;width:77px;height:35px;background:#333333;"></div>
<div class="t" style="left:1404.0px;top:1221.1px;font-size:14px;line-height:14px;color:#9a9a9a;">)</div>
<div class="t" style="left:1435.2px;top:1229.9px;font-size:19px;line-height:19px;color:#fff;">9</div>
<div class="a" style="left:1480px;top:1217px;width:77px;height:35px;background:#333333;"></div>
<div class="t" style="left:1485.0px;top:1221.1px;font-size:14px;line-height:14px;color:#9a9a9a;">=</div>
<div class="t" style="left:1516.2px;top:1229.9px;font-size:19px;line-height:19px;color:#fff;">0</div>
<div class="a" style="left:1561px;top:1217px;width:77px;height:35px;background:#333333;"></div>
<div class="t" style="left:1566.0px;top:1221.1px;font-size:14px;line-height:14px;color:#9a9a9a;">?</div>
<div class="t" style="left:1597.0px;top:1229.9px;font-size:19px;line-height:19px;color:#fff;">+</div>
<div class="a" style="left:1642px;top:1217px;width:77px;height:35px;background:#333333;"></div>
<div class="t" style="left:1647.0px;top:1221.1px;font-size:14px;line-height:14px;color:#9a9a9a;">`</div>
<div class="t" style="left:1680.3px;top:1229.9px;font-size:19px;line-height:19px;color:#fff;">´</div>
<div class="a" style="left:1723px;top:1217px;width:131px;height:35px;background:#333333;"></div>
<svg class="a" style="left:1733px;top:1223px" width="26" height="16" viewBox="0 0 26 16"><path d="M8 1.5H24.5V14.5H8L1.5 8Z" fill="none" stroke="#fff" stroke-width="1.5"/><path d="M12 4.5L19 11.5M19 4.5L12 11.5" stroke="#fff" stroke-width="1.5"/></svg>
<div class="a" style="left:589px;top:1256px;width:118px;height:35px;background:#333333;"></div>
<div class="t" style="left:594.0px;top:1259.4px;font-size:19px;line-height:19px;color:#fff;">Tabb</div>
<div class="a" style="left:711px;top:1256px;width:77px;height:35px;background:#333333;"></div>
<div class="t" style="left:716.0px;top:1259.4px;font-size:19px;line-height:19px;color:#fff;">q</div>
<div class="a" style="left:792px;top:1256px;width:77px;height:35px;background:#333333;"></div>
<div class="t" style="left:797.0px;top:1259.4px;font-size:19px;line-height:19px;color:#fff;">w</div>
<div class="a" style="left:873px;top:1256px;width:77px;height:35px;background:#333333;"></div>
<div class="t" style="left:878.0px;top:1259.4px;font-size:19px;line-height:19px;color:#fff;">e</div>
<div class="a" style="left:954px;top:1256px;width:77px;height:35px;background:#333333;"></div>
<div class="t" style="left:959.0px;top:1259.4px;font-size:19px;line-height:19px;color:#fff;">r</div>
<div class="a" style="left:1035px;top:1256px;width:77px;height:35px;background:#333333;"></div>
<div class="t" style="left:1040.0px;top:1259.4px;font-size:19px;line-height:19px;color:#fff;">t</div>
<div class="a" style="left:1116px;top:1256px;width:77px;height:35px;background:#333333;"></div>
<div class="t" style="left:1121.0px;top:1259.4px;font-size:19px;line-height:19px;color:#fff;">y</div>
<div class="a" style="left:1197px;top:1256px;width:77px;height:35px;background:#333333;"></div>
<div class="t" style="left:1202.0px;top:1259.4px;font-size:19px;line-height:19px;color:#fff;">u</div>
<div class="a" style="left:1278px;top:1256px;width:77px;height:35px;background:#333333;"></div>
<div class="t" style="left:1283.0px;top:1259.4px;font-size:19px;line-height:19px;color:#fff;">i</div>
<div class="a" style="left:1359px;top:1256px;width:77px;height:35px;background:#333333;"></div>
<div class="t" style="left:1364.0px;top:1259.4px;font-size:19px;line-height:19px;color:#fff;">o</div>
<div class="a" style="left:1440px;top:1256px;width:77px;height:35px;background:#333333;"></div>
<div class="t" style="left:1445.0px;top:1259.4px;font-size:19px;line-height:19px;color:#fff;">p</div>
<div class="a" style="left:1521px;top:1256px;width:77px;height:35px;background:#333333;"></div>
<div class="t" style="left:1526.0px;top:1259.4px;font-size:19px;line-height:19px;color:#fff;">å</div>
<div class="a" style="left:1602px;top:1256px;width:77px;height:35px;background:#333333;"></div>
<div class="t" style="left:1607.0px;top:1260.1px;font-size:14px;line-height:14px;color:#9a9a9a;">^</div>
<div class="t" style="left:1638.8px;top:1265.9px;font-size:19px;line-height:19px;color:#fff;">¨</div>
<div class="a" style="left:1683px;top:1256px;width:171px;height:35px;background:#333333;"></div>
<div class="a" style="left:1714px;top:1286px;width:140px;height:44px;background:#333333;"></div>
<div class="t" style="left:1758.0px;top:1264.1px;font-size:19.5px;line-height:19.5px;color:#fff;">Retur</div>
<div class="a" style="left:589px;top:1295px;width:149px;height:35px;background:#333333;"></div>
<div class="t" style="left:594.0px;top:1298.4px;font-size:19px;line-height:19px;color:#fff;">Caps</div>
<div class="a" style="left:742px;top:1295px;width:77px;height:35px;background:#333333;"></div>
<div class="t" style="left:747.0px;top:1298.4px;font-size:19px;line-height:19px;color:#fff;">a</div>
<div class="a" style="left:823px;top:1295px;width:77px;height:35px;background:#333333;"></div>
<div class="t" style="left:828.0px;top:1298.4px;font-size:19px;line-height:19px;color:#fff;">s</div>
<div class="a" style="left:904px;top:1295px;width:77px;height:35px;background:#333333;"></div>
<div class="t" style="left:909.0px;top:1298.4px;font-size:19px;line-height:19px;color:#fff;">d</div>
<div class="a" style="left:985px;top:1295px;width:77px;height:35px;background:#333333;"></div>
<div class="t" style="left:990.0px;top:1298.4px;font-size:19px;line-height:19px;color:#fff;">f</div>
<div class="a" style="left:1066px;top:1295px;width:77px;height:35px;background:#333333;"></div>
<div class="t" style="left:1071.0px;top:1298.4px;font-size:19px;line-height:19px;color:#fff;">g</div>
<div class="a" style="left:1147px;top:1295px;width:77px;height:35px;background:#333333;"></div>
<div class="t" style="left:1152.0px;top:1298.4px;font-size:19px;line-height:19px;color:#fff;">h</div>
<div class="a" style="left:1228px;top:1295px;width:77px;height:35px;background:#333333;"></div>
<div class="t" style="left:1233.0px;top:1298.4px;font-size:19px;line-height:19px;color:#fff;">j</div>
<div class="a" style="left:1309px;top:1295px;width:77px;height:35px;background:#333333;"></div>
<div class="t" style="left:1314.0px;top:1298.4px;font-size:19px;line-height:19px;color:#fff;">k</div>
<div class="a" style="left:1390px;top:1295px;width:77px;height:35px;background:#333333;"></div>
<div class="t" style="left:1395.0px;top:1298.4px;font-size:19px;line-height:19px;color:#fff;">l</div>
<div class="a" style="left:1471px;top:1295px;width:77px;height:35px;background:#333333;"></div>
<div class="t" style="left:1476.0px;top:1298.4px;font-size:19px;line-height:19px;color:#fff;">ö</div>
<div class="a" style="left:1552px;top:1295px;width:77px;height:35px;background:#333333;"></div>
<div class="t" style="left:1557.0px;top:1298.4px;font-size:19px;line-height:19px;color:#fff;">ä</div>
<div class="a" style="left:1633px;top:1295px;width:77px;height:35px;background:#333333;"></div>
<div class="t" style="left:1638.0px;top:1299.1px;font-size:14px;line-height:14px;color:#9a9a9a;">*</div>
<div class="t" style="left:1670.4px;top:1308.9px;font-size:19px;line-height:19px;color:#fff;">,</div>
<div class="a" style="left:589px;top:1334px;width:118px;height:35px;background:#333333;"></div>
<div class="t" style="left:594.0px;top:1337.4px;font-size:19px;line-height:19px;color:#fff;">Skift</div>
<div class="a" style="left:711px;top:1334px;width:77px;height:35px;background:#333333;"></div>
<div class="t" style="left:716.0px;top:1338.1px;font-size:14px;line-height:14px;color:#9a9a9a;">&gt;</div>
<div class="t" style="left:745.5px;top:1347.9px;font-size:19px;line-height:19px;color:#fff;">&lt;</div>
<div class="a" style="left:792px;top:1334px;width:77px;height:35px;background:#333333;"></div>
<div class="t" style="left:797.0px;top:1337.4px;font-size:19px;line-height:19px;color:#fff;">z</div>
<div class="a" style="left:873px;top:1334px;width:77px;height:35px;background:#333333;"></div>
<div class="t" style="left:878.0px;top:1337.4px;font-size:19px;line-height:19px;color:#fff;">x</div>
<div class="a" style="left:954px;top:1334px;width:77px;height:35px;background:#333333;"></div>
<div class="t" style="left:959.0px;top:1337.4px;font-size:19px;line-height:19px;color:#fff;">c</div>
<div class="a" style="left:1035px;top:1334px;width:77px;height:35px;background:#333333;"></div>
<div class="t" style="left:1040.0px;top:1337.4px;font-size:19px;line-height:19px;color:#fff;">v</div>
<div class="a" style="left:1116px;top:1334px;width:77px;height:35px;background:#333333;"></div>
<div class="t" style="left:1121.0px;top:1337.4px;font-size:19px;line-height:19px;color:#fff;">b</div>
<div class="a" style="left:1197px;top:1334px;width:77px;height:35px;background:#333333;"></div>
<div class="t" style="left:1202.0px;top:1337.4px;font-size:19px;line-height:19px;color:#fff;">n</div>
<div class="a" style="left:1278px;top:1334px;width:77px;height:35px;background:#333333;"></div>
<div class="t" style="left:1283.0px;top:1337.4px;font-size:19px;line-height:19px;color:#fff;">m</div>
<div class="a" style="left:1359px;top:1334px;width:77px;height:35px;background:#333333;"></div>
<div class="t" style="left:1364.0px;top:1338.1px;font-size:14px;line-height:14px;color:#9a9a9a;">;</div>
<div class="t" style="left:1397.9px;top:1346.9px;font-size:19px;line-height:19px;color:#fff;">,</div>
<div class="a" style="left:1440px;top:1334px;width:77px;height:35px;background:#333333;"></div>
<div class="t" style="left:1445.0px;top:1338.1px;font-size:14px;line-height:14px;color:#9a9a9a;">:</div>
<div class="t" style="left:1478.9px;top:1346.9px;font-size:19px;line-height:19px;color:#fff;">.</div>
<div class="a" style="left:1521px;top:1334px;width:77px;height:35px;background:#333333;"></div>
<div class="t" style="left:1526.0px;top:1338.1px;font-size:14px;line-height:14px;color:#9a9a9a;">_</div>
<div class="t" style="left:1559.3px;top:1346.9px;font-size:19px;line-height:19px;color:#fff;">-</div>
<div class="a" style="left:1602px;top:1334px;width:77px;height:35px;background:#333333;"></div>
<svg class="a" style="left:1607px;top:1336px" width="22" height="14"><path d="M2 12L11 3L20 12" stroke="#fff" stroke-width="1.6" fill="none"/></svg>
<div class="a" style="left:1683px;top:1334px;width:77px;height:35px;background:#333333;"></div>
<div class="t" style="left:1688.0px;top:1337.4px;font-size:19px;line-height:19px;color:#fff;">Skift</div>
<div class="a" style="left:1764px;top:1334px;width:90px;height:35px;background:#333333;"></div>
<div class="t" style="left:1768.0px;top:1337.4px;font-size:19px;line-height:19px;color:#fff;">Del</div>
<div class="a" style="left:589px;top:1373px;width:77px;height:35px;background:#333333;"></div>
<div class="t" style="left:594.0px;top:1376.4px;font-size:19px;line-height:19px;color:#fff;">Fn</div>
<div class="a" style="left:670px;top:1373px;width:77px;height:35px;background:#333333;"></div>
<div class="t" style="left:675.0px;top:1376.4px;font-size:19px;line-height:19px;color:#fff;">Ctrl</div>
<div class="a" style="left:751px;top:1373px;width:77px;height:35px;background:#333333;"></div>
<svg class="a" style="left:782px;top:1382px" width="14" height="14" viewBox="0 0 14 14"><path d="M0 2L6 1V6.5H0ZM7 0.8L14 0V6.5H7ZM0 7.5H6V13L0 12ZM7 7.5H14V14L7 13.2Z" fill="#fff"/></svg>
<div class="a" style="left:832px;top:1373px;width:77px;height:35px;background:#333333;"></div>
<div class="t" style="left:837.0px;top:1376.4px;font-size:19px;line-height:19px;color:#fff;">Alt</div>
<div class="a" style="left:913px;top:1373px;width:446px;height:35px;background:#333333;"></div>
<div class="a" style="left:1363px;top:1373px;width:77px;height:35px;background:#333333;"></div>
<div class="t" style="left:1368.0px;top:1376.4px;font-size:19px;line-height:19px;color:#fff;">AltGr</div>
<div class="a" style="left:1444px;top:1373px;width:77px;height:35px;background:#333333;"></div>
<div class="t" style="left:1449.0px;top:1376.4px;font-size:19px;line-height:19px;color:#fff;">Ctrl</div>
<div class="a" style="left:1525px;top:1373px;width:77px;height:35px;background:#333333;"></div>
<svg class="a" style="left:1528px;top:1377px" width="14" height="22"><path d="M12 2L3 11L12 20" stroke="#fff" stroke-width="1.6" fill="none"/></svg>
<div class="a" style="left:1606px;top:1373px;width:77px;height:35px;background:#333333;"></div>
<svg class="a" style="left:1611px;top:1375px" width="22" height="14"><path d="M2 2L11 11L20 2" stroke="#fff" stroke-width="1.6" fill="none"/></svg>
<div class="a" style="left:1687px;top:1373px;width:77px;height:35px;background:#333333;"></div>
<svg class="a" style="left:1690px;top:1377px" width="14" height="22"><path d="M2 2L11 11L2 20" stroke="#fff" stroke-width="1.6" fill="none"/></svg>
<div class="a" style="left:1768px;top:1373px;width:86px;height:35px;background:#333333;"></div>
<svg class="a" style="left:1804px;top:1382px" width="12" height="14"><rect x="1" y="1" width="10" height="12" fill="none" stroke="#fff" stroke-width="1.3"/><path d="M3 5H9M3 8H9M3 11H9" stroke="#fff" stroke-width="1.2"/></svg>
<div class="a" style="left:1870px;top:1217px;width:95px;height:35px;background:#333333;"></div>
<div class="a" style="left:1969px;top:1217px;width:95px;height:35px;background:#333333;"></div>
<div class="a" style="left:2072px;top:1217px;width:97px;height:35px;background:#333333;"></div>
<div class="t" style="left:1874.5px;top:1218.9px;font-size:19.5px;line-height:19.5px;color:#fff;">Home</div>
<div class="t" style="left:1973.3px;top:1218.9px;font-size:19.5px;line-height:19.5px;color:#fff;transform:scaleX(0.9902);transform-origin:0 0;">PgUp</div>
<div class="t" style="left:2076.4px;top:1218.1px;font-size:18.5px;line-height:18.5px;color:#fff;transform:scaleX(0.9239);transform-origin:0 0;">Navigering</div>
<div class="a" style="left:1870px;top:1256px;width:95px;height:34px;background:#333333;"></div>
<div class="a" style="left:1969px;top:1256px;width:95px;height:34px;background:#333333;"></div>
<div class="a" style="left:2072px;top:1256px;width:97px;height:34px;background:#333333;"></div>
<div class="t" style="left:1874.5px;top:1258.1px;font-size:19.5px;line-height:19.5px;color:#fff;transform:scaleX(0.9137);transform-origin:0 0;">End</div>
<div class="t" style="left:1973.3px;top:1258.1px;font-size:19.5px;line-height:19.5px;color:#fff;transform:scaleX(0.9677);transform-origin:0 0;">PgDn</div>
<div class="t" style="left:2076.4px;top:1257.8px;font-size:18.5px;line-height:18.5px;color:#fff;transform:scaleX(1.0058);transform-origin:0 0;">Flytta upp</div>
<div class="a" style="left:1870px;top:1295px;width:95px;height:35px;background:#333333;"></div>
<div class="a" style="left:1969px;top:1295px;width:95px;height:35px;background:#333333;"></div>
<div class="a" style="left:2072px;top:1295px;width:97px;height:35px;background:#333333;"></div>
<div class="t" style="left:1874.5px;top:1297.3px;font-size:19.5px;line-height:19.5px;color:#fff;transform:scaleX(0.9638);transform-origin:0 0;">Insert</div>
<div class="t" style="left:1973.3px;top:1297.3px;font-size:19.5px;line-height:19.5px;color:#fff;transform:scaleX(0.8881);transform-origin:0 0;">Pause</div>
<div class="t" style="left:2076.4px;top:1297.6px;font-size:18.5px;line-height:18.5px;color:#fff;transform:scaleX(1.0526);transform-origin:0 0;">Flytta ned</div>
<div class="a" style="left:1870px;top:1334px;width:95px;height:34px;background:#0078d7;"></div>
<div class="a" style="left:1969px;top:1334px;width:95px;height:34px;background:#333333;"></div>
<div class="a" style="left:2072px;top:1334px;width:97px;height:34px;background:#333333;"></div>
<div class="t" style="left:1874.5px;top:1336.4px;font-size:19.5px;line-height:19.5px;color:#fff;transform:scaleX(0.9399);transform-origin:0 0;">PrtScn</div>
<div class="t" style="left:1973.3px;top:1336.4px;font-size:19.5px;line-height:19.5px;color:#fff;transform:scaleX(0.9028);transform-origin:0 0;">ScrLk</div>
<div class="t" style="left:2076.4px;top:1336.8px;font-size:18.5px;line-height:18.5px;color:#7a7a7a;transform:scaleX(1.0165);transform-origin:0 0;">Docka</div>
<div class="a" style="left:1870px;top:1375px;width:95px;height:31px;background:#333333;"></div>
<div class="a" style="left:1969px;top:1375px;width:95px;height:31px;background:#333333;"></div>
<div class="a" style="left:2072px;top:1375px;width:97px;height:31px;background:#333333;"></div>
<div class="t" style="left:1874.5px;top:1375.5px;font-size:19.5px;line-height:19.5px;color:#fff;transform:scaleX(0.9239);transform-origin:0 0;">Alternativ</div>
<div class="t" style="left:1973.3px;top:1375.5px;font-size:19.5px;line-height:19.5px;color:#fff;transform:scaleX(0.9047);transform-origin:0 0;">Hjälp</div>
<div class="t" style="left:2076.4px;top:1374.7px;font-size:18.5px;line-height:18.5px;color:#fff;transform:scaleX(1.0545);transform-origin:0 0;">Tona</div>
<div class="a" style="left:1346px;top:1114px;width:23px;height:2px;background:#8a8a8a"></div>
<div class="t" style="left:1852.0px;top:1415.8px;font-size:28px;line-height:28px;color:rgba(190,190,190,0.55);transform:scaleX(1.0282);transform-origin:0 0;">Gå till Inställningar om du vill aktivera Windows.</div>
</body></html>
